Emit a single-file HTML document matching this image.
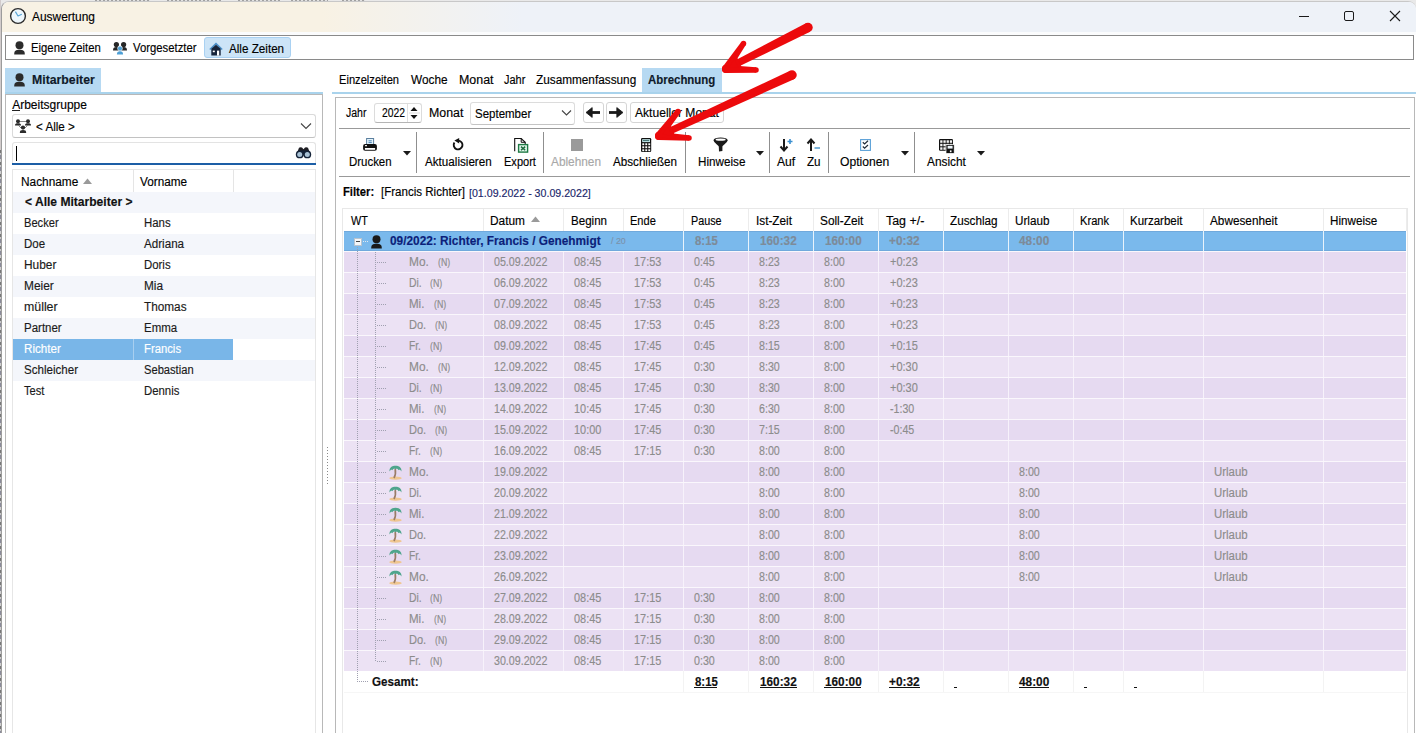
<!DOCTYPE html>
<html><head><meta charset="utf-8"><title>Auswertung</title>
<style>
html,body{margin:0;padding:0;width:1416px;height:733px;overflow:hidden;background:#fff;}
body{position:relative;font-family:"Liberation Sans",sans-serif;}
body>div,body>span,body>svg{position:absolute;}
.t{white-space:nowrap;transform-origin:0 0;}
</style></head><body>
<div style="left:0px;top:0px;width:1416px;height:733px;background:#e9e9e9"></div>
<div style="left:0px;top:0px;width:1px;height:733px;background:#d2cccc"></div>
<div style="left:0px;top:150px;width:1px;height:583px;background:repeating-linear-gradient(180deg,#777 0px,#777 3px,#c8c8c8 3px,#c8c8c8 5px,#8a8a9a 5px,#8a8a9a 9px,#d0d0d0 9px,#d0d0d0 12px)"></div>
<div style="left:95px;top:0px;width:55px;height:1px;background:repeating-linear-gradient(90deg,#a0a0a0 0px,#a0a0a0 2px,#e2e2e2 2px,#e2e2e2 4px)"></div>
<div style="left:167px;top:0px;width:54px;height:1px;background:repeating-linear-gradient(90deg,#a0a0a0 0px,#a0a0a0 2px,#e2e2e2 2px,#e2e2e2 4px)"></div>
<div style="left:238px;top:0px;width:42px;height:1px;background:repeating-linear-gradient(90deg,#a0a0a0 0px,#a0a0a0 2px,#e2e2e2 2px,#e2e2e2 4px)"></div>
<div style="left:291px;top:0px;width:37px;height:1px;background:repeating-linear-gradient(90deg,#a0a0a0 0px,#a0a0a0 2px,#e2e2e2 2px,#e2e2e2 4px)"></div>
<div style="left:342px;top:0px;width:23px;height:1px;background:repeating-linear-gradient(90deg,#a0a0a0 0px,#a0a0a0 2px,#e2e2e2 2px,#e2e2e2 4px)"></div>
<div style="left:1px;top:1px;width:1415px;height:732px;background:#fff;border-top:1px solid #c8c8c8;border-left:1px solid #9c9c9c;border-top-left-radius:8px;border-top-right-radius:8px;box-sizing:border-box"></div>
<div style="left:2px;top:2px;width:1414px;height:30px;background:linear-gradient(90deg,#f8f2e4 0px,#f8f2e4 320px,#eef2f8 520px,#eef2f8 100%);border-top-left-radius:7px;border-top-right-radius:7px"></div>
<div style="left:3px;top:32px;width:1413px;height:3px;background:#fbfcfd"></div>
<svg style="left:9px;top:7px;" width="18" height="18" viewBox="0 0 18 18"><circle cx="9" cy="9" r="7.4" fill="#eef7fc" stroke="#2b2b2b" stroke-width="1.4"/><path d="M6.4 4.6 L9 9 L12.8 7.2" stroke="#5aa6d6" stroke-width="1.2" fill="none" stroke-linejoin="round"/></svg>
<span class="t" style="left:32.00px;top:11px;font-size:12px;line-height:12px;font-weight:400;color:#000;transform:scaleX(0.9941);-webkit-text-stroke:0.15px currentColor;">Auswertung</span>
<div style="left:1299px;top:16px;width:10px;height:1px;background:#1a1a1a"></div>
<div style="left:1344px;top:11px;width:10px;height:10px;border:1px solid #1a1a1a;border-radius:2px;box-sizing:border-box"></div>
<svg style="left:1389px;top:10px;" width="12" height="12" viewBox="0 0 12 12"><path d="M1 1 L11 11 M11 1 L1 11" stroke="#1a1a1a" stroke-width="1.1"/></svg>
<div style="left:5px;top:35px;width:1409px;height:25px;border:1px solid #8a8a8a;box-sizing:border-box;background:#fff"></div>
<svg style="left:14px;top:41px;" width="11" height="14" viewBox="0 0 11 14"><circle cx="5.5" cy="4.2" r="4" fill="#2b2b2b"/><path d="M0.2 13.6 C0.2 9.6 1.8 8.8 5.5 8.8 C9.2 8.8 10.8 9.6 10.8 13.6 Z" fill="#2b2b2b"/></svg>
<span class="t" style="left:30.60px;top:42px;font-size:12px;line-height:12px;font-weight:400;color:#000;transform:scaleX(0.9424);-webkit-text-stroke:0.15px currentColor;">Eigene Zeiten</span>
<svg style="left:113px;top:42px;" width="14" height="13" viewBox="0 0 14 13"><circle cx="3.4" cy="2.6" r="2.6" fill="#262626"/><circle cx="10.6" cy="2.6" r="2.6" fill="#262626"/><path d="M0 8.6 C0 5.6 1.2 5 3.4 5 C5.6 5 6.8 5.6 6.8 8.6 Z" fill="#262626"/><path d="M7.2 8.6 C7.2 5.6 8.4 5 10.6 5 C12.8 5 14 5.6 14 8.6 Z" fill="#262626"/><circle cx="7" cy="6.5" r="2.4" fill="#4c9fd6" stroke="#fff" stroke-width="0.6"/><path d="M3.9 12.6 C3.9 9.9 5 9.2 7 9.2 C9 9.2 10.1 9.9 10.1 12.6 Z" fill="#4c9fd6"/></svg>
<span class="t" style="left:132.50px;top:42px;font-size:12px;line-height:12px;font-weight:400;color:#000;transform:scaleX(0.9425);-webkit-text-stroke:0.15px currentColor;">Vorgesetzter</span>
<div style="left:204px;top:37px;width:87px;height:21px;background:#cce4f7;border:1px solid #a9d1f2;border-radius:3px;box-sizing:border-box"></div>
<svg style="left:209px;top:42px;" width="15" height="14" viewBox="0 0 15 14"><path d="M0.8 7.5 L7 1.6 L13.2 7.5" stroke="#4a8fc8" stroke-width="1.5" fill="none"/><path d="M2.3 6.8 L7 2.8 L11.7 6.8 L11.7 13.6 L2.3 13.6 Z" fill="#16243a"/><rect x="3.8" y="8.6" width="2" height="1.6" fill="#fff"/><rect x="8" y="8.6" width="2.2" height="5" fill="#fff"/></svg>
<span class="t" style="left:228.50px;top:43px;font-size:12px;line-height:12px;font-weight:400;color:#000;transform:scaleX(0.9720);-webkit-text-stroke:0.15px currentColor;">Alle Zeiten</span>
<div style="left:5px;top:68px;width:96px;height:24px;background:#b6d9f2"></div>
<svg style="left:14px;top:73px;" width="11" height="14" viewBox="0 0 11 14"><circle cx="5.5" cy="4.2" r="4" fill="#2b2b2b"/><path d="M0.2 13.6 C0.2 9.6 1.8 8.8 5.5 8.8 C9.2 8.8 10.8 9.6 10.8 13.6 Z" fill="#2b2b2b"/></svg>
<span class="t" style="left:31.90px;top:74px;font-size:12px;line-height:12px;font-weight:700;color:#0f1a2a;transform:scaleX(1.0232);-webkit-text-stroke:0.15px currentColor;">Mitarbeiter</span>
<div style="left:5px;top:92px;width:318px;height:2px;background:#a9d3ec"></div>
<div style="left:5px;top:94px;width:318px;height:650px;border:1px solid #b8b8b8;box-sizing:border-box"></div>
<span class="t" style="left:12.20px;top:99px;font-size:12px;line-height:12px;font-weight:400;color:#000;-webkit-text-stroke:0.15px currentColor;">Arbeitsgruppe</span>
<div style="left:12px;top:110px;width:8px;height:1px;background:#222"></div>
<div style="left:12px;top:114px;width:304px;height:24px;border:1px solid #dadada;border-bottom-color:#c2c2c2;border-radius:3px;box-sizing:border-box;background:#fff"></div>
<svg style="left:15px;top:119px;" width="16" height="14" viewBox="0 0 16 14"><circle cx="3" cy="2.2" r="2" fill="#2b2b2b"/><circle cx="13" cy="2.2" r="2" fill="#2b2b2b"/><path d="M0 6.5 C0 4.5 1 4.2 3 4.2 C5 4.2 6 4.5 6 6.5Z M10 6.5 C10 4.5 11 4.2 13 4.2 C15 4.2 16 4.5 16 6.5Z" fill="#2b2b2b"/><path d="M5 2.5 L11 2.5 M3.5 6.5 L6.5 9.5 M12.5 6.5 L9.5 9.5" stroke="#555" stroke-width="0.7"/><circle cx="8" cy="8.6" r="2.1" fill="#2b2b2b"/><path d="M4.8 14 C4.8 11.6 5.8 11 8 11 C10.2 11 11.2 11.6 11.2 14Z" fill="#2b2b2b"/></svg>
<span class="t" style="left:36.20px;top:121px;font-size:12px;line-height:12px;font-weight:400;color:#000;transform:scaleX(0.9710);-webkit-text-stroke:0.15px currentColor;">&lt; Alle &gt;</span>
<svg style="left:300px;top:122px;" width="12" height="8" viewBox="0 0 12 8"><path d="M1 1.5 L6 6.5 L11 1.5" stroke="#444" stroke-width="1.1" fill="none"/></svg>
<div style="left:12px;top:142px;width:304px;height:23px;border:1px solid #e3e3e3;border-bottom:none;border-radius:3px 3px 0 0;box-sizing:border-box;background:#fff"></div>
<div style="left:12px;top:163px;width:304px;height:2px;background:#1c5ea6"></div>
<div style="left:16px;top:146px;width:1px;height:15px;background:#000"></div>
<svg style="left:295px;top:146px;" width="17" height="13" viewBox="0 0 17 13"><path d="M2.2 6.5 L4 1.8 Q5.5 0.6 7 1.6 L8.5 3.2 L10 1.6 Q11.5 0.6 13 1.8 L14.8 6.5 Z" fill="#1e1e24"/><rect x="6" y="4.5" width="5" height="5" fill="#142238"/><circle cx="4.7" cy="8.4" r="3.9" fill="#142238"/><circle cx="12.3" cy="8.4" r="3.9" fill="#142238"/><circle cx="4.7" cy="8.4" r="2.5" fill="#a9c2d6"/><circle cx="12.3" cy="8.4" r="2.5" fill="#a9c2d6"/></svg>
<div style="left:12px;top:169px;width:304px;height:580px;border:1px solid #e6e6e6;box-sizing:border-box;background:#fff"></div>
<div style="left:133px;top:170px;width:1px;height:22px;background:#e5e5e5"></div>
<div style="left:233px;top:170px;width:1px;height:22px;background:#e5e5e5"></div>
<span class="t" style="left:20.60px;top:176px;font-size:12px;line-height:12px;font-weight:400;color:#000;transform:scaleX(0.9869);-webkit-text-stroke:0.15px currentColor;">Nachname</span>
<svg style="left:83px;top:178px;" width="9" height="6" viewBox="0 0 9 6"><path d="M0 6 L4.5 0.5 L9 6 Z" fill="#9a9a9a"/></svg>
<span class="t" style="left:140.00px;top:176px;font-size:12px;line-height:12px;font-weight:400;color:#000;transform:scaleX(0.9792);-webkit-text-stroke:0.15px currentColor;">Vorname</span>
<div style="left:13px;top:192px;width:302px;height:21px;background:#f4f6fb"></div>
<span class="t" style="left:25.00px;top:196px;font-size:12px;line-height:12px;font-weight:700;color:#111;transform:scaleX(1.0053);-webkit-text-stroke:0.15px currentColor;">&lt; Alle Mitarbeiter &gt;</span>
<span class="t" style="left:24.40px;top:217px;font-size:12px;line-height:12px;font-weight:400;color:#1a1a1a;transform:scaleX(0.9258);-webkit-text-stroke:0.15px currentColor;">Becker</span>
<span class="t" style="left:144.40px;top:217px;font-size:12px;line-height:12px;font-weight:400;color:#1a1a1a;transform:scaleX(0.9500);-webkit-text-stroke:0.15px currentColor;">Hans</span>
<div style="left:13px;top:234px;width:302px;height:21px;background:#f4f6fb"></div>
<span class="t" style="left:24.40px;top:238px;font-size:12px;line-height:12px;font-weight:400;color:#1a1a1a;transform:scaleX(0.9591);-webkit-text-stroke:0.15px currentColor;">Doe</span>
<span class="t" style="left:144.40px;top:238px;font-size:12px;line-height:12px;font-weight:400;color:#1a1a1a;transform:scaleX(0.9692);-webkit-text-stroke:0.15px currentColor;">Adriana</span>
<span class="t" style="left:24.40px;top:259px;font-size:12px;line-height:12px;font-weight:400;color:#1a1a1a;transform:scaleX(0.9912);-webkit-text-stroke:0.15px currentColor;">Huber</span>
<span class="t" style="left:144.40px;top:259px;font-size:12px;line-height:12px;font-weight:400;color:#1a1a1a;transform:scaleX(0.9500);-webkit-text-stroke:0.15px currentColor;">Doris</span>
<div style="left:13px;top:276px;width:302px;height:21px;background:#f4f6fb"></div>
<span class="t" style="left:24.40px;top:280px;font-size:12px;line-height:12px;font-weight:400;color:#1a1a1a;transform:scaleX(0.9933);-webkit-text-stroke:0.15px currentColor;">Meier</span>
<span class="t" style="left:144.40px;top:280px;font-size:12px;line-height:12px;font-weight:400;color:#1a1a1a;transform:scaleX(0.9858);-webkit-text-stroke:0.15px currentColor;">Mia</span>
<span class="t" style="left:24.40px;top:301px;font-size:12px;line-height:12px;font-weight:400;color:#1a1a1a;transform:scaleX(1.0279);-webkit-text-stroke:0.15px currentColor;">müller</span>
<span class="t" style="left:144.40px;top:301px;font-size:12px;line-height:12px;font-weight:400;color:#1a1a1a;transform:scaleX(0.9821);-webkit-text-stroke:0.15px currentColor;">Thomas</span>
<div style="left:13px;top:318px;width:302px;height:21px;background:#f4f6fb"></div>
<span class="t" style="left:24.40px;top:322px;font-size:12px;line-height:12px;font-weight:400;color:#1a1a1a;transform:scaleX(0.9575);-webkit-text-stroke:0.15px currentColor;">Partner</span>
<span class="t" style="left:144.40px;top:322px;font-size:12px;line-height:12px;font-weight:400;color:#1a1a1a;transform:scaleX(0.9571);-webkit-text-stroke:0.15px currentColor;">Emma</span>
<div style="left:13px;top:339px;width:220px;height:21px;background:#79b6e8"></div>
<div style="left:133px;top:339px;width:1px;height:21px;background:#a8cff0"></div>
<span class="t" style="left:24.40px;top:343px;font-size:12px;line-height:12px;font-weight:400;color:#fff;transform:scaleX(0.9684);-webkit-text-stroke:0.15px currentColor;">Richter</span>
<span class="t" style="left:144.40px;top:343px;font-size:12px;line-height:12px;font-weight:400;color:#fff;transform:scaleX(0.9412);-webkit-text-stroke:0.15px currentColor;">Francis</span>
<div style="left:13px;top:360px;width:302px;height:21px;background:#f4f6fb"></div>
<span class="t" style="left:24.40px;top:364px;font-size:12px;line-height:12px;font-weight:400;color:#1a1a1a;transform:scaleX(0.9643);-webkit-text-stroke:0.15px currentColor;">Schleicher</span>
<span class="t" style="left:144.40px;top:364px;font-size:12px;line-height:12px;font-weight:400;color:#1a1a1a;transform:scaleX(0.9293);-webkit-text-stroke:0.15px currentColor;">Sebastian</span>
<span class="t" style="left:24.40px;top:385px;font-size:12px;line-height:12px;font-weight:400;color:#1a1a1a;transform:scaleX(0.9273);-webkit-text-stroke:0.15px currentColor;">Test</span>
<span class="t" style="left:144.40px;top:385px;font-size:12px;line-height:12px;font-weight:400;color:#1a1a1a;transform:scaleX(0.9472);-webkit-text-stroke:0.15px currentColor;">Dennis</span>
<div style="left:327px;top:447px;width:1px;height:38px;background:repeating-linear-gradient(180deg,#8a8a8a 0px,#8a8a8a 1px,transparent 1px,transparent 3px)"></div>
<span class="t" style="left:338.50px;top:74px;font-size:12px;line-height:12px;font-weight:400;color:#000;transform:scaleX(0.9275);-webkit-text-stroke:0.15px currentColor;">Einzelzeiten</span>
<span class="t" style="left:410.50px;top:74px;font-size:12px;line-height:12px;font-weight:400;color:#000;transform:scaleX(0.9832);-webkit-text-stroke:0.15px currentColor;">Woche</span>
<span class="t" style="left:458.50px;top:74px;font-size:12px;line-height:12px;font-weight:400;color:#000;transform:scaleX(1.0337);-webkit-text-stroke:0.15px currentColor;">Monat</span>
<span class="t" style="left:503.70px;top:74px;font-size:12px;line-height:12px;font-weight:400;color:#000;transform:scaleX(0.9112);-webkit-text-stroke:0.15px currentColor;">Jahr</span>
<span class="t" style="left:536.30px;top:74px;font-size:12px;line-height:12px;font-weight:400;color:#000;transform:scaleX(0.9818);-webkit-text-stroke:0.15px currentColor;">Zusammenfassung</span>
<div style="left:642px;top:68px;width:80px;height:24px;background:#b6d9f2"></div>
<span class="t" style="left:648.40px;top:74px;font-size:12px;line-height:12px;font-weight:700;color:#0f1a2a;transform:scaleX(0.9521);-webkit-text-stroke:0.15px currentColor;">Abrechnung</span>
<div style="left:332px;top:92px;width:1084px;height:2px;background:#a9d3ec"></div>
<div style="left:335px;top:97px;width:1080px;height:650px;border:1px solid #b8b8b8;box-sizing:border-box"></div>
<span class="t" style="left:346.30px;top:107px;font-size:12px;line-height:12px;font-weight:400;color:#000;transform:scaleX(0.8770);-webkit-text-stroke:0.15px currentColor;">Jahr</span>
<div style="left:374px;top:103px;width:48px;height:20px;border:1px solid #dcdcdc;border-bottom-color:#b5b5b5;border-radius:3px;box-sizing:border-box"></div>
<span class="t" style="left:382.30px;top:107px;font-size:12px;line-height:12px;font-weight:400;color:#000;transform:scaleX(0.8618);-webkit-text-stroke:0.15px currentColor;">2022</span>
<div style="left:407px;top:104px;width:13px;height:18px;border-left:1px solid #e0e0e0"></div>
<svg style="left:408px;top:105px;" width="12" height="16" viewBox="0 0 12 16"><path d="M2.5 6 L6 2 L9.5 6Z M2.5 10 L6 14 L9.5 10Z" fill="#111"/><path d="M1 8 L12 8" stroke="#ddd" stroke-width="1"/></svg>
<span class="t" style="left:429.40px;top:107px;font-size:12px;line-height:12px;font-weight:400;color:#000;transform:scaleX(1.0307);-webkit-text-stroke:0.15px currentColor;">Monat</span>
<div style="left:470px;top:102px;width:105px;height:23px;border:1px solid #dcdcdc;border-bottom-color:#c4c4c4;border-radius:3px;box-sizing:border-box"></div>
<span class="t" style="left:474.50px;top:108px;font-size:12px;line-height:12px;font-weight:400;color:#000;transform:scaleX(0.9576);-webkit-text-stroke:0.15px currentColor;">September</span>
<svg style="left:561px;top:109px;" width="11" height="8" viewBox="0 0 11 8"><path d="M1 1.5 L5.5 6 L10 1.5" stroke="#444" stroke-width="1.1" fill="none"/></svg>
<div style="left:583px;top:102px;width:21px;height:21px;border:1px solid #d5d5d5;border-radius:3px;box-sizing:border-box"></div>
<svg style="left:585px;top:106px;" width="16" height="12" viewBox="0 0 16 12"><path d="M1 6.5 L7.2 1.6 L7.2 11.4 Z" fill="#1a1a1a" stroke="#1a1a1a" stroke-width="0.8" stroke-linejoin="round"/><rect x="6" y="5.1" width="9" height="2.8" fill="#1a1a1a"/></svg>
<div style="left:606px;top:102px;width:21px;height:21px;border:1px solid #d5d5d5;border-radius:3px;box-sizing:border-box"></div>
<svg style="left:608px;top:106px;" width="16" height="12" viewBox="0 0 16 12"><path d="M15 6.5 L8.8 1.6 L8.8 11.4 Z" fill="#1a1a1a" stroke="#1a1a1a" stroke-width="0.8" stroke-linejoin="round"/><rect x="1" y="5.1" width="9" height="2.8" fill="#1a1a1a"/></svg>
<div style="left:630px;top:102px;width:94px;height:21px;border:1px solid #d5d5d5;border-radius:3px;box-sizing:border-box"></div>
<span class="t" style="left:635.40px;top:107px;font-size:12px;line-height:12px;font-weight:400;color:#000;transform:scaleX(1.0063);-webkit-text-stroke:0.15px currentColor;">Aktueller Monat</span>
<div style="left:339px;top:128px;width:1071px;height:1px;background:#999"></div>
<div style="left:416px;top:132px;width:1px;height:41px;background:#8f8f8f"></div>
<div style="left:543px;top:132px;width:1px;height:41px;background:#8f8f8f"></div>
<div style="left:685px;top:132px;width:1px;height:41px;background:#8f8f8f"></div>
<div style="left:769px;top:132px;width:1px;height:41px;background:#8f8f8f"></div>
<div style="left:828px;top:132px;width:1px;height:41px;background:#8f8f8f"></div>
<div style="left:914px;top:132px;width:1px;height:41px;background:#8f8f8f"></div>
<div style="left:339px;top:176px;width:1071px;height:1px;background:#999"></div>
<svg style="left:362px;top:137px;" width="16" height="15" viewBox="0 0 16 15"><rect x="4.6" y="1.5" width="7" height="6" fill="#e3f3fb" stroke="#5b7f9e" stroke-width="1"/><path d="M6.5 3.8 H9.8 M6.5 5.6 H9.8" stroke="#3b78ae" stroke-width="0.9"/><rect x="1.1" y="7" width="13.8" height="6.8" rx="2" fill="#111"/><rect x="2.9" y="11" width="10.2" height="1.8" fill="#fff"/><rect x="3" y="8.1" width="2" height="1.1" fill="#fff"/></svg>
<span class="t" style="left:348.60px;top:156px;font-size:12px;line-height:12px;font-weight:400;color:#000;transform:scaleX(0.9533);-webkit-text-stroke:0.15px currentColor;">Drucken</span>
<svg style="left:403px;top:151px;" width="8" height="5" viewBox="0 0 8 5"><path d="M0 0 L8 0 L4 4.5Z" fill="#1a1a1a"/></svg>
<svg style="left:451px;top:137px;" width="14" height="14" viewBox="0 0 14 14"><path d="M7.5 3.6 A4.4 4.4 0 1 1 3.4 5.6" stroke="#111" stroke-width="1.9" fill="none"/><path d="M3.4 3.6 L8.2 0.9 L8.2 6.4 Z" fill="#111"/></svg>
<span class="t" style="left:424.70px;top:156px;font-size:12px;line-height:12px;font-weight:400;color:#000;transform:scaleX(0.9711);-webkit-text-stroke:0.15px currentColor;">Aktualisieren</span>
<svg style="left:513px;top:137px;" width="16" height="16" viewBox="0 0 16 16"><path d="M1.7 14.2 V1.5 H8.2 L12.2 5.3 V8" stroke="#111" stroke-width="1.1" fill="#fff"/><path d="M8.2 1.5 V5.3 H12.2" stroke="#111" stroke-width="1" fill="none"/><rect x="5.6" y="7.6" width="9" height="7.5" fill="#e6fbf0" stroke="#1e7a45" stroke-width="1.4"/><path d="M8 9.6 L12.2 13.2 M12.2 9.6 L8 13.2" stroke="#1e6b3e" stroke-width="1.5"/></svg>
<span class="t" style="left:503.60px;top:156px;font-size:12px;line-height:12px;font-weight:400;color:#000;transform:scaleX(0.9196);-webkit-text-stroke:0.15px currentColor;">Export</span>
<div style="left:571px;top:139px;width:12px;height:12px;background:#9a9a9a"></div>
<span class="t" style="left:551.00px;top:156px;font-size:12px;line-height:12px;font-weight:400;color:#a8a8a8;transform:scaleX(0.9864);-webkit-text-stroke:0.15px currentColor;">Ablehnen</span>
<svg style="left:640px;top:137px;" width="12" height="16" viewBox="0 0 12 16"><rect x="1" y="1" width="10.2" height="14" rx="1.2" fill="#111"/><rect x="2.2" y="2.2" width="7.8" height="2.9" fill="#c6ecee"/><path d="M3 3.6 H9.2" stroke="#2a5a5a" stroke-width="0.9"/><rect x="2.3" y="6.3" width="1.9" height="1.9" fill="#fff"/><rect x="2.3" y="9.3" width="1.9" height="1.9" fill="#fff"/><rect x="2.3" y="12.3" width="1.9" height="1.9" fill="#fff"/><rect x="5.3" y="6.3" width="1.9" height="1.9" fill="#fff"/><rect x="5.3" y="9.3" width="1.9" height="1.9" fill="#fff"/><rect x="5.3" y="12.3" width="1.9" height="1.9" fill="#fff"/><rect x="8.3" y="6.3" width="1.9" height="1.9" fill="#fff"/><rect x="8.3" y="9.3" width="1.9" height="1.9" fill="#fff"/><rect x="8.3" y="12.3" width="1.9" height="1.9" fill="#fff"/></svg>
<span class="t" style="left:613.20px;top:156px;font-size:12px;line-height:12px;font-weight:400;color:#000;transform:scaleX(0.9703);-webkit-text-stroke:0.15px currentColor;">Abschließen</span>
<svg style="left:713px;top:137px;" width="16" height="16" viewBox="0 0 16 16"><path d="M0.6 3 C1 6.2 5.6 8 5.8 9.8 L6 14.6 L9.4 13.9 L9.4 9.8 C9.6 8 14.2 6.2 14.6 3 Z" fill="#1a1a1a"/><ellipse cx="7.6" cy="3" rx="7" ry="2.5" fill="#1a1a1a"/><ellipse cx="7.6" cy="2.7" rx="5" ry="1.1" fill="#fff"/></svg>
<span class="t" style="left:697.60px;top:156px;font-size:12px;line-height:12px;font-weight:400;color:#000;transform:scaleX(0.9736);-webkit-text-stroke:0.15px currentColor;">Hinweise</span>
<svg style="left:756px;top:151px;" width="8" height="5" viewBox="0 0 8 5"><path d="M0 0 L8 0 L4 4.5Z" fill="#1a1a1a"/></svg>
<svg style="left:779px;top:138px;" width="15" height="14" viewBox="0 0 15 14"><path d="M5 1 L5 12 M1.5 8.5 L5 12.5 L8.5 8.5" stroke="#1a1a1a" stroke-width="2" fill="none"/><path d="M11 1 L11 6 M8.5 3.5 L13.5 3.5" stroke="#3a8fd0" stroke-width="1.6"/></svg>
<span class="t" style="left:777.20px;top:156px;font-size:12px;line-height:12px;font-weight:400;color:#000;transform:scaleX(1.0131);-webkit-text-stroke:0.15px currentColor;">Auf</span>
<svg style="left:806px;top:138px;" width="15" height="14" viewBox="0 0 15 14"><path d="M5 13 L5 2 M1.5 5.5 L5 1.5 L8.5 5.5" stroke="#1a1a1a" stroke-width="2" fill="none"/><path d="M8.5 10 L14 10" stroke="#5aa0d0" stroke-width="1.6"/></svg>
<span class="t" style="left:807.00px;top:156px;font-size:12px;line-height:12px;font-weight:400;color:#000;transform:scaleX(0.9714);-webkit-text-stroke:0.15px currentColor;">Zu</span>
<svg style="left:860px;top:139px;" width="11" height="12" viewBox="0 0 11 12"><rect x="0.6" y="0.6" width="9.8" height="10.8" fill="#fff" stroke="#5aa0d8" stroke-width="1.1"/><path d="M2.8 3.3 L4.6 5 L8 1.8 M2.8 7.5 L4.6 9.2 L8 6" stroke="#1e2a38" stroke-width="1.2" fill="none"/></svg>
<span class="t" style="left:840.40px;top:156px;font-size:12px;line-height:12px;font-weight:400;color:#000;transform:scaleX(1.0105);-webkit-text-stroke:0.15px currentColor;">Optionen</span>
<svg style="left:901px;top:151px;" width="8" height="5" viewBox="0 0 8 5"><path d="M0 0 L8 0 L4 4.5Z" fill="#1a1a1a"/></svg>
<svg style="left:938px;top:138px;" width="17" height="16" viewBox="0 0 17 16"><rect x="1" y="1" width="14" height="11.8" rx="1.2" fill="#111"/><rect x="2.2" y="2.3" width="2.3" height="2.5" fill="#f4f4f4"/><rect x="2.2" y="5.8" width="2.3" height="2.5" fill="#f4f4f4"/><rect x="2.2" y="9.3" width="2.3" height="2.5" fill="#f4f4f4"/><rect x="5.4" y="2.3" width="2.3" height="2.5" fill="#f4f4f4"/><rect x="5.4" y="5.8" width="2.3" height="2.5" fill="#f4f4f4"/><rect x="5.4" y="9.3" width="2.3" height="2.5" fill="#f4f4f4"/><rect x="8.6" y="2.3" width="2.3" height="2.5" fill="#f4f4f4"/><rect x="8.6" y="5.8" width="2.3" height="2.5" fill="#f4f4f4"/><rect x="8.6" y="9.3" width="2.3" height="2.5" fill="#f4f4f4"/><rect x="11.8" y="2.3" width="2.3" height="2.5" fill="#f4f4f4"/><rect x="11.8" y="5.8" width="2.3" height="2.5" fill="#f4f4f4"/><rect x="11.8" y="9.3" width="2.3" height="2.5" fill="#f4f4f4"/><rect x="8" y="6.6" width="8.2" height="8.8" fill="#111" stroke="#fff" stroke-width="0.7"/><rect x="9.6" y="7.8" width="5" height="2.8" fill="#eef6fb"/><rect x="11.9" y="12.4" width="1.6" height="1.8" fill="#fff"/></svg>
<span class="t" style="left:926.90px;top:156px;font-size:12px;line-height:12px;font-weight:400;color:#000;transform:scaleX(0.9879);-webkit-text-stroke:0.15px currentColor;">Ansicht</span>
<svg style="left:977px;top:151px;" width="8" height="5" viewBox="0 0 8 5"><path d="M0 0 L8 0 L4 4.5Z" fill="#1a1a1a"/></svg>
<span class="t" style="left:342.60px;top:186px;font-size:12px;line-height:12px;font-weight:700;color:#000;transform:scaleX(0.9366);-webkit-text-stroke:0.15px currentColor;">Filter:</span>
<span class="t" style="left:380.60px;top:186px;font-size:12px;line-height:12px;font-weight:400;color:#000;transform:scaleX(0.9625);-webkit-text-stroke:0.15px currentColor;">[Francis Richter]</span>
<span class="t" style="left:468.70px;top:188px;font-size:11px;line-height:11px;font-weight:400;color:#20266a;transform:scaleX(0.9667);-webkit-text-stroke:0.15px currentColor;">[01.09.2022 - 30.09.2022]</span>
<div style="left:342px;top:208px;width:1066px;height:540px;border:1px solid #e8e8e8;box-sizing:border-box;background:#fff"></div>
<span class="t" style="left:350.60px;top:215px;font-size:12px;line-height:12px;font-weight:400;color:#000;transform:scaleX(0.9043);-webkit-text-stroke:0.15px currentColor;">WT</span>
<div style="left:483px;top:209px;width:1px;height:22px;background:#ececec"></div>
<span class="t" style="left:490.40px;top:215px;font-size:12px;line-height:12px;font-weight:400;color:#000;transform:scaleX(0.9894);-webkit-text-stroke:0.15px currentColor;">Datum</span>
<div style="left:563px;top:209px;width:1px;height:22px;background:#ececec"></div>
<span class="t" style="left:570.50px;top:215px;font-size:12px;line-height:12px;font-weight:400;color:#000;transform:scaleX(0.9632);-webkit-text-stroke:0.15px currentColor;">Beginn</span>
<div style="left:623px;top:209px;width:1px;height:22px;background:#ececec"></div>
<span class="t" style="left:630.20px;top:215px;font-size:12px;line-height:12px;font-weight:400;color:#000;transform:scaleX(0.9214);-webkit-text-stroke:0.15px currentColor;">Ende</span>
<div style="left:683px;top:209px;width:1px;height:22px;background:#ececec"></div>
<span class="t" style="left:690.50px;top:215px;font-size:12px;line-height:12px;font-weight:400;color:#000;transform:scaleX(0.8971);-webkit-text-stroke:0.15px currentColor;">Pause</span>
<div style="left:748px;top:209px;width:1px;height:22px;background:#ececec"></div>
<span class="t" style="left:755.60px;top:215px;font-size:12px;line-height:12px;font-weight:400;color:#000;transform:scaleX(0.9813);-webkit-text-stroke:0.15px currentColor;">Ist-Zeit</span>
<div style="left:813px;top:209px;width:1px;height:22px;background:#ececec"></div>
<span class="t" style="left:820.20px;top:215px;font-size:12px;line-height:12px;font-weight:400;color:#000;transform:scaleX(0.9864);-webkit-text-stroke:0.15px currentColor;">Soll-Zeit</span>
<div style="left:878px;top:209px;width:1px;height:22px;background:#ececec"></div>
<span class="t" style="left:885.90px;top:215px;font-size:12px;line-height:12px;font-weight:400;color:#000;transform:scaleX(1.0351);-webkit-text-stroke:0.15px currentColor;">Tag +/-</span>
<div style="left:943px;top:209px;width:1px;height:22px;background:#ececec"></div>
<span class="t" style="left:949.70px;top:215px;font-size:12px;line-height:12px;font-weight:400;color:#000;transform:scaleX(0.9777);-webkit-text-stroke:0.15px currentColor;">Zuschlag</span>
<div style="left:1008px;top:209px;width:1px;height:22px;background:#ececec"></div>
<span class="t" style="left:1015.30px;top:215px;font-size:12px;line-height:12px;font-weight:400;color:#000;transform:scaleX(0.9724);-webkit-text-stroke:0.15px currentColor;">Urlaub</span>
<div style="left:1073px;top:209px;width:1px;height:22px;background:#ececec"></div>
<span class="t" style="left:1080.40px;top:215px;font-size:12px;line-height:12px;font-weight:400;color:#000;transform:scaleX(0.9288);-webkit-text-stroke:0.15px currentColor;">Krank</span>
<div style="left:1123px;top:209px;width:1px;height:22px;background:#ececec"></div>
<span class="t" style="left:1130.20px;top:215px;font-size:12px;line-height:12px;font-weight:400;color:#000;transform:scaleX(0.9600);-webkit-text-stroke:0.15px currentColor;">Kurzarbeit</span>
<div style="left:1203px;top:209px;width:1px;height:22px;background:#ececec"></div>
<span class="t" style="left:1210.40px;top:215px;font-size:12px;line-height:12px;font-weight:400;color:#000;transform:scaleX(0.9813);-webkit-text-stroke:0.15px currentColor;">Abwesenheit</span>
<div style="left:1323px;top:209px;width:1px;height:22px;background:#ececec"></div>
<span class="t" style="left:1330.40px;top:215px;font-size:12px;line-height:12px;font-weight:400;color:#000;transform:scaleX(0.9715);-webkit-text-stroke:0.15px currentColor;">Hinweise</span>
<div style="left:1406px;top:209px;width:1px;height:22px;background:#ececec"></div>
<svg style="left:531px;top:216px;" width="9" height="6" viewBox="0 0 9 6"><path d="M0 6 L4.5 0.5 L9 6 Z" fill="#9a9a9a"/></svg>
<div style="left:344px;top:231px;width:1062px;height:20px;background:#7ab9ec"></div>
<div style="left:344px;top:231px;width:1062px;height:1px;background:#70a9dc"></div>
<div style="left:344px;top:250px;width:1062px;height:1px;background:#70a9dc"></div>
<div style="left:683px;top:231px;width:1px;height:20px;background:#e8f3fc"></div>
<div style="left:748px;top:231px;width:1px;height:20px;background:#e8f3fc"></div>
<div style="left:813px;top:231px;width:1px;height:20px;background:#e8f3fc"></div>
<div style="left:878px;top:231px;width:1px;height:20px;background:#e8f3fc"></div>
<div style="left:943px;top:231px;width:1px;height:20px;background:#e8f3fc"></div>
<div style="left:1008px;top:231px;width:1px;height:20px;background:#e8f3fc"></div>
<div style="left:1073px;top:231px;width:1px;height:20px;background:#e8f3fc"></div>
<div style="left:1123px;top:231px;width:1px;height:20px;background:#e8f3fc"></div>
<div style="left:1203px;top:231px;width:1px;height:20px;background:#e8f3fc"></div>
<div style="left:1323px;top:231px;width:1px;height:20px;background:#e8f3fc"></div>
<div style="left:344px;top:251px;width:1062px;height:1px;background:#e6f5fc"></div>
<div style="left:354px;top:238px;width:8px;height:8px;border:1px solid #b8c4d0;background:#f4f6f8;box-sizing:border-box"></div>
<div style="left:356px;top:241px;width:4px;height:1px;background:#444"></div>
<div style="left:363px;top:241px;width:6px;height:1px;background:repeating-linear-gradient(90deg,#dfe9f3 0px,#dfe9f3 1px,transparent 1px,transparent 2px)"></div>
<svg style="left:371px;top:235px;" width="11" height="14" viewBox="0 0 11 14"><circle cx="5.5" cy="4.2" r="4" fill="#1a1a1a"/><path d="M0.2 13.6 C0.2 9.6 1.8 8.8 5.5 8.8 C9.2 8.8 10.8 9.6 10.8 13.6 Z" fill="#1a1a1a"/></svg>
<span class="t" style="left:390.00px;top:235px;font-size:12px;line-height:12px;font-weight:700;color:#0c1f7a;transform:scaleX(0.9867);-webkit-text-stroke:0.15px currentColor;">09/2022: Richter, Francis / Genehmigt</span>
<span class="t" style="left:610.50px;top:237px;font-size:9px;line-height:9px;font-weight:400;color:#7a93ad;transform:scaleX(0.9867);-webkit-text-stroke:0.15px currentColor;">/ 20</span>
<span class="t" style="left:694.50px;top:235px;font-size:12px;line-height:12px;font-weight:700;color:#7d8b99;transform:scaleX(0.9500);-webkit-text-stroke:0.15px currentColor;">8:15</span>
<span class="t" style="left:759.70px;top:235px;font-size:12px;line-height:12px;font-weight:700;color:#7d8b99;transform:scaleX(0.9819);-webkit-text-stroke:0.15px currentColor;">160:32</span>
<span class="t" style="left:824.50px;top:235px;font-size:12px;line-height:12px;font-weight:700;color:#7d8b99;transform:scaleX(0.9819);-webkit-text-stroke:0.15px currentColor;">160:00</span>
<span class="t" style="left:889.30px;top:235px;font-size:12px;line-height:12px;font-weight:700;color:#7d8b99;transform:scaleX(0.9903);-webkit-text-stroke:0.15px currentColor;">+0:32</span>
<span class="t" style="left:1019.00px;top:235px;font-size:12px;line-height:12px;font-weight:700;color:#7d8b99;transform:scaleX(0.9841);-webkit-text-stroke:0.15px currentColor;">48:00</span>
<div style="left:344px;top:251px;width:1062px;height:1px;background:#faf7fc"></div>
<div style="left:344px;top:252px;width:1062px;height:20px;background:#e6daf1"></div>
<div style="left:483px;top:252px;width:1px;height:20px;background:#f7f2fb"></div>
<div style="left:563px;top:252px;width:1px;height:20px;background:#f7f2fb"></div>
<div style="left:623px;top:252px;width:1px;height:20px;background:#f7f2fb"></div>
<div style="left:683px;top:252px;width:1px;height:20px;background:#f7f2fb"></div>
<div style="left:748px;top:252px;width:1px;height:20px;background:#f7f2fb"></div>
<div style="left:813px;top:252px;width:1px;height:20px;background:#f7f2fb"></div>
<div style="left:878px;top:252px;width:1px;height:20px;background:#f7f2fb"></div>
<div style="left:943px;top:252px;width:1px;height:20px;background:#f7f2fb"></div>
<div style="left:1008px;top:252px;width:1px;height:20px;background:#f7f2fb"></div>
<div style="left:1073px;top:252px;width:1px;height:20px;background:#f7f2fb"></div>
<div style="left:1123px;top:252px;width:1px;height:20px;background:#f7f2fb"></div>
<div style="left:1203px;top:252px;width:1px;height:20px;background:#f7f2fb"></div>
<div style="left:1323px;top:252px;width:1px;height:20px;background:#f7f2fb"></div>
<div style="left:377px;top:262px;width:10px;height:1px;background:repeating-linear-gradient(90deg,#a0a0b0 0px,#a0a0b0 1px,transparent 1px,transparent 2px)"></div>
<span class="t" style="left:408.60px;top:256px;font-size:12px;line-height:12px;font-weight:400;color:#8c8c8c;transform:scaleX(0.9900);-webkit-text-stroke:0.15px currentColor;">Mo.</span>
<span class="t" style="left:437.50px;top:258px;font-size:10px;line-height:10px;font-weight:400;color:#8c8c8c;transform:scaleX(0.8793);-webkit-text-stroke:0.15px currentColor;">(N)</span>
<span class="t" style="left:494.30px;top:256px;font-size:12px;line-height:12px;font-weight:400;color:#8c8c8c;transform:scaleX(0.8891);-webkit-text-stroke:0.15px currentColor;">05.09.2022</span>
<span class="t" style="left:573.80px;top:256px;font-size:12px;line-height:12px;font-weight:400;color:#8c8c8c;transform:scaleX(0.9100);-webkit-text-stroke:0.15px currentColor;">08:45</span>
<span class="t" style="left:634.00px;top:256px;font-size:12px;line-height:12px;font-weight:400;color:#8c8c8c;transform:scaleX(0.9100);-webkit-text-stroke:0.15px currentColor;">17:53</span>
<span class="t" style="left:694.00px;top:256px;font-size:12px;line-height:12px;font-weight:400;color:#8c8c8c;transform:scaleX(0.8898);-webkit-text-stroke:0.15px currentColor;">0:45</span>
<span class="t" style="left:759.10px;top:256px;font-size:12px;line-height:12px;font-weight:400;color:#8c8c8c;transform:scaleX(0.8898);-webkit-text-stroke:0.15px currentColor;">8:23</span>
<span class="t" style="left:824.20px;top:256px;font-size:12px;line-height:12px;font-weight:400;color:#8c8c8c;transform:scaleX(0.8898);-webkit-text-stroke:0.15px currentColor;">8:00</span>
<span class="t" style="left:889.60px;top:256px;font-size:12px;line-height:12px;font-weight:400;color:#8c8c8c;transform:scaleX(0.9152);-webkit-text-stroke:0.15px currentColor;">+0:23</span>
<div style="left:344px;top:272px;width:1062px;height:1px;background:#faf7fc"></div>
<div style="left:344px;top:273px;width:1062px;height:20px;background:#ece2f4"></div>
<div style="left:483px;top:273px;width:1px;height:20px;background:#f7f2fb"></div>
<div style="left:563px;top:273px;width:1px;height:20px;background:#f7f2fb"></div>
<div style="left:623px;top:273px;width:1px;height:20px;background:#f7f2fb"></div>
<div style="left:683px;top:273px;width:1px;height:20px;background:#f7f2fb"></div>
<div style="left:748px;top:273px;width:1px;height:20px;background:#f7f2fb"></div>
<div style="left:813px;top:273px;width:1px;height:20px;background:#f7f2fb"></div>
<div style="left:878px;top:273px;width:1px;height:20px;background:#f7f2fb"></div>
<div style="left:943px;top:273px;width:1px;height:20px;background:#f7f2fb"></div>
<div style="left:1008px;top:273px;width:1px;height:20px;background:#f7f2fb"></div>
<div style="left:1073px;top:273px;width:1px;height:20px;background:#f7f2fb"></div>
<div style="left:1123px;top:273px;width:1px;height:20px;background:#f7f2fb"></div>
<div style="left:1203px;top:273px;width:1px;height:20px;background:#f7f2fb"></div>
<div style="left:1323px;top:273px;width:1px;height:20px;background:#f7f2fb"></div>
<div style="left:377px;top:283px;width:10px;height:1px;background:repeating-linear-gradient(90deg,#a0a0b0 0px,#a0a0b0 1px,transparent 1px,transparent 2px)"></div>
<span class="t" style="left:408.60px;top:277px;font-size:12px;line-height:12px;font-weight:400;color:#8c8c8c;transform:scaleX(0.8647);-webkit-text-stroke:0.15px currentColor;">Di.</span>
<span class="t" style="left:430.30px;top:279px;font-size:10px;line-height:10px;font-weight:400;color:#8c8c8c;transform:scaleX(0.8793);-webkit-text-stroke:0.15px currentColor;">(N)</span>
<span class="t" style="left:494.30px;top:277px;font-size:12px;line-height:12px;font-weight:400;color:#8c8c8c;transform:scaleX(0.8891);-webkit-text-stroke:0.15px currentColor;">06.09.2022</span>
<span class="t" style="left:573.80px;top:277px;font-size:12px;line-height:12px;font-weight:400;color:#8c8c8c;transform:scaleX(0.9100);-webkit-text-stroke:0.15px currentColor;">08:45</span>
<span class="t" style="left:634.00px;top:277px;font-size:12px;line-height:12px;font-weight:400;color:#8c8c8c;transform:scaleX(0.9100);-webkit-text-stroke:0.15px currentColor;">17:53</span>
<span class="t" style="left:694.00px;top:277px;font-size:12px;line-height:12px;font-weight:400;color:#8c8c8c;transform:scaleX(0.8898);-webkit-text-stroke:0.15px currentColor;">0:45</span>
<span class="t" style="left:759.10px;top:277px;font-size:12px;line-height:12px;font-weight:400;color:#8c8c8c;transform:scaleX(0.8898);-webkit-text-stroke:0.15px currentColor;">8:23</span>
<span class="t" style="left:824.20px;top:277px;font-size:12px;line-height:12px;font-weight:400;color:#8c8c8c;transform:scaleX(0.8898);-webkit-text-stroke:0.15px currentColor;">8:00</span>
<span class="t" style="left:889.60px;top:277px;font-size:12px;line-height:12px;font-weight:400;color:#8c8c8c;transform:scaleX(0.9152);-webkit-text-stroke:0.15px currentColor;">+0:23</span>
<div style="left:344px;top:293px;width:1062px;height:1px;background:#faf7fc"></div>
<div style="left:344px;top:294px;width:1062px;height:20px;background:#e6daf1"></div>
<div style="left:483px;top:294px;width:1px;height:20px;background:#f7f2fb"></div>
<div style="left:563px;top:294px;width:1px;height:20px;background:#f7f2fb"></div>
<div style="left:623px;top:294px;width:1px;height:20px;background:#f7f2fb"></div>
<div style="left:683px;top:294px;width:1px;height:20px;background:#f7f2fb"></div>
<div style="left:748px;top:294px;width:1px;height:20px;background:#f7f2fb"></div>
<div style="left:813px;top:294px;width:1px;height:20px;background:#f7f2fb"></div>
<div style="left:878px;top:294px;width:1px;height:20px;background:#f7f2fb"></div>
<div style="left:943px;top:294px;width:1px;height:20px;background:#f7f2fb"></div>
<div style="left:1008px;top:294px;width:1px;height:20px;background:#f7f2fb"></div>
<div style="left:1073px;top:294px;width:1px;height:20px;background:#f7f2fb"></div>
<div style="left:1123px;top:294px;width:1px;height:20px;background:#f7f2fb"></div>
<div style="left:1203px;top:294px;width:1px;height:20px;background:#f7f2fb"></div>
<div style="left:1323px;top:294px;width:1px;height:20px;background:#f7f2fb"></div>
<div style="left:377px;top:304px;width:10px;height:1px;background:repeating-linear-gradient(90deg,#a0a0b0 0px,#a0a0b0 1px,transparent 1px,transparent 2px)"></div>
<span class="t" style="left:408.60px;top:298px;font-size:12px;line-height:12px;font-weight:400;color:#8c8c8c;transform:scaleX(0.9625);-webkit-text-stroke:0.15px currentColor;">Mi.</span>
<span class="t" style="left:433.60px;top:300px;font-size:10px;line-height:10px;font-weight:400;color:#8c8c8c;transform:scaleX(0.8793);-webkit-text-stroke:0.15px currentColor;">(N)</span>
<span class="t" style="left:494.30px;top:298px;font-size:12px;line-height:12px;font-weight:400;color:#8c8c8c;transform:scaleX(0.8891);-webkit-text-stroke:0.15px currentColor;">07.09.2022</span>
<span class="t" style="left:573.80px;top:298px;font-size:12px;line-height:12px;font-weight:400;color:#8c8c8c;transform:scaleX(0.9100);-webkit-text-stroke:0.15px currentColor;">08:45</span>
<span class="t" style="left:634.00px;top:298px;font-size:12px;line-height:12px;font-weight:400;color:#8c8c8c;transform:scaleX(0.9100);-webkit-text-stroke:0.15px currentColor;">17:53</span>
<span class="t" style="left:694.00px;top:298px;font-size:12px;line-height:12px;font-weight:400;color:#8c8c8c;transform:scaleX(0.8898);-webkit-text-stroke:0.15px currentColor;">0:45</span>
<span class="t" style="left:759.10px;top:298px;font-size:12px;line-height:12px;font-weight:400;color:#8c8c8c;transform:scaleX(0.8898);-webkit-text-stroke:0.15px currentColor;">8:23</span>
<span class="t" style="left:824.20px;top:298px;font-size:12px;line-height:12px;font-weight:400;color:#8c8c8c;transform:scaleX(0.8898);-webkit-text-stroke:0.15px currentColor;">8:00</span>
<span class="t" style="left:889.60px;top:298px;font-size:12px;line-height:12px;font-weight:400;color:#8c8c8c;transform:scaleX(0.9152);-webkit-text-stroke:0.15px currentColor;">+0:23</span>
<div style="left:344px;top:314px;width:1062px;height:1px;background:#faf7fc"></div>
<div style="left:344px;top:315px;width:1062px;height:20px;background:#ece2f4"></div>
<div style="left:483px;top:315px;width:1px;height:20px;background:#f7f2fb"></div>
<div style="left:563px;top:315px;width:1px;height:20px;background:#f7f2fb"></div>
<div style="left:623px;top:315px;width:1px;height:20px;background:#f7f2fb"></div>
<div style="left:683px;top:315px;width:1px;height:20px;background:#f7f2fb"></div>
<div style="left:748px;top:315px;width:1px;height:20px;background:#f7f2fb"></div>
<div style="left:813px;top:315px;width:1px;height:20px;background:#f7f2fb"></div>
<div style="left:878px;top:315px;width:1px;height:20px;background:#f7f2fb"></div>
<div style="left:943px;top:315px;width:1px;height:20px;background:#f7f2fb"></div>
<div style="left:1008px;top:315px;width:1px;height:20px;background:#f7f2fb"></div>
<div style="left:1073px;top:315px;width:1px;height:20px;background:#f7f2fb"></div>
<div style="left:1123px;top:315px;width:1px;height:20px;background:#f7f2fb"></div>
<div style="left:1203px;top:315px;width:1px;height:20px;background:#f7f2fb"></div>
<div style="left:1323px;top:315px;width:1px;height:20px;background:#f7f2fb"></div>
<div style="left:377px;top:325px;width:10px;height:1px;background:repeating-linear-gradient(90deg,#a0a0b0 0px,#a0a0b0 1px,transparent 1px,transparent 2px)"></div>
<span class="t" style="left:408.60px;top:319px;font-size:12px;line-height:12px;font-weight:400;color:#8c8c8c;transform:scaleX(0.9204);-webkit-text-stroke:0.15px currentColor;">Do.</span>
<span class="t" style="left:434.90px;top:321px;font-size:10px;line-height:10px;font-weight:400;color:#8c8c8c;transform:scaleX(0.8793);-webkit-text-stroke:0.15px currentColor;">(N)</span>
<span class="t" style="left:494.30px;top:319px;font-size:12px;line-height:12px;font-weight:400;color:#8c8c8c;transform:scaleX(0.8891);-webkit-text-stroke:0.15px currentColor;">08.09.2022</span>
<span class="t" style="left:573.80px;top:319px;font-size:12px;line-height:12px;font-weight:400;color:#8c8c8c;transform:scaleX(0.9100);-webkit-text-stroke:0.15px currentColor;">08:45</span>
<span class="t" style="left:634.00px;top:319px;font-size:12px;line-height:12px;font-weight:400;color:#8c8c8c;transform:scaleX(0.9100);-webkit-text-stroke:0.15px currentColor;">17:53</span>
<span class="t" style="left:694.00px;top:319px;font-size:12px;line-height:12px;font-weight:400;color:#8c8c8c;transform:scaleX(0.8898);-webkit-text-stroke:0.15px currentColor;">0:45</span>
<span class="t" style="left:759.10px;top:319px;font-size:12px;line-height:12px;font-weight:400;color:#8c8c8c;transform:scaleX(0.8898);-webkit-text-stroke:0.15px currentColor;">8:23</span>
<span class="t" style="left:824.20px;top:319px;font-size:12px;line-height:12px;font-weight:400;color:#8c8c8c;transform:scaleX(0.8898);-webkit-text-stroke:0.15px currentColor;">8:00</span>
<span class="t" style="left:889.60px;top:319px;font-size:12px;line-height:12px;font-weight:400;color:#8c8c8c;transform:scaleX(0.9152);-webkit-text-stroke:0.15px currentColor;">+0:23</span>
<div style="left:344px;top:335px;width:1062px;height:1px;background:#faf7fc"></div>
<div style="left:344px;top:336px;width:1062px;height:20px;background:#e6daf1"></div>
<div style="left:483px;top:336px;width:1px;height:20px;background:#f7f2fb"></div>
<div style="left:563px;top:336px;width:1px;height:20px;background:#f7f2fb"></div>
<div style="left:623px;top:336px;width:1px;height:20px;background:#f7f2fb"></div>
<div style="left:683px;top:336px;width:1px;height:20px;background:#f7f2fb"></div>
<div style="left:748px;top:336px;width:1px;height:20px;background:#f7f2fb"></div>
<div style="left:813px;top:336px;width:1px;height:20px;background:#f7f2fb"></div>
<div style="left:878px;top:336px;width:1px;height:20px;background:#f7f2fb"></div>
<div style="left:943px;top:336px;width:1px;height:20px;background:#f7f2fb"></div>
<div style="left:1008px;top:336px;width:1px;height:20px;background:#f7f2fb"></div>
<div style="left:1073px;top:336px;width:1px;height:20px;background:#f7f2fb"></div>
<div style="left:1123px;top:336px;width:1px;height:20px;background:#f7f2fb"></div>
<div style="left:1203px;top:336px;width:1px;height:20px;background:#f7f2fb"></div>
<div style="left:1323px;top:336px;width:1px;height:20px;background:#f7f2fb"></div>
<div style="left:377px;top:346px;width:10px;height:1px;background:repeating-linear-gradient(90deg,#a0a0b0 0px,#a0a0b0 1px,transparent 1px,transparent 2px)"></div>
<span class="t" style="left:408.60px;top:340px;font-size:12px;line-height:12px;font-weight:400;color:#8c8c8c;transform:scaleX(0.8500);-webkit-text-stroke:0.15px currentColor;">Fr.</span>
<span class="t" style="left:429.70px;top:342px;font-size:10px;line-height:10px;font-weight:400;color:#8c8c8c;transform:scaleX(0.8793);-webkit-text-stroke:0.15px currentColor;">(N)</span>
<span class="t" style="left:494.30px;top:340px;font-size:12px;line-height:12px;font-weight:400;color:#8c8c8c;transform:scaleX(0.8891);-webkit-text-stroke:0.15px currentColor;">09.09.2022</span>
<span class="t" style="left:573.80px;top:340px;font-size:12px;line-height:12px;font-weight:400;color:#8c8c8c;transform:scaleX(0.9100);-webkit-text-stroke:0.15px currentColor;">08:45</span>
<span class="t" style="left:634.00px;top:340px;font-size:12px;line-height:12px;font-weight:400;color:#8c8c8c;transform:scaleX(0.9100);-webkit-text-stroke:0.15px currentColor;">17:45</span>
<span class="t" style="left:694.00px;top:340px;font-size:12px;line-height:12px;font-weight:400;color:#8c8c8c;transform:scaleX(0.8898);-webkit-text-stroke:0.15px currentColor;">0:45</span>
<span class="t" style="left:759.10px;top:340px;font-size:12px;line-height:12px;font-weight:400;color:#8c8c8c;transform:scaleX(0.8898);-webkit-text-stroke:0.15px currentColor;">8:15</span>
<span class="t" style="left:824.20px;top:340px;font-size:12px;line-height:12px;font-weight:400;color:#8c8c8c;transform:scaleX(0.8898);-webkit-text-stroke:0.15px currentColor;">8:00</span>
<span class="t" style="left:889.60px;top:340px;font-size:12px;line-height:12px;font-weight:400;color:#8c8c8c;transform:scaleX(0.9152);-webkit-text-stroke:0.15px currentColor;">+0:15</span>
<div style="left:344px;top:356px;width:1062px;height:1px;background:#faf7fc"></div>
<div style="left:344px;top:357px;width:1062px;height:20px;background:#ece2f4"></div>
<div style="left:483px;top:357px;width:1px;height:20px;background:#f7f2fb"></div>
<div style="left:563px;top:357px;width:1px;height:20px;background:#f7f2fb"></div>
<div style="left:623px;top:357px;width:1px;height:20px;background:#f7f2fb"></div>
<div style="left:683px;top:357px;width:1px;height:20px;background:#f7f2fb"></div>
<div style="left:748px;top:357px;width:1px;height:20px;background:#f7f2fb"></div>
<div style="left:813px;top:357px;width:1px;height:20px;background:#f7f2fb"></div>
<div style="left:878px;top:357px;width:1px;height:20px;background:#f7f2fb"></div>
<div style="left:943px;top:357px;width:1px;height:20px;background:#f7f2fb"></div>
<div style="left:1008px;top:357px;width:1px;height:20px;background:#f7f2fb"></div>
<div style="left:1073px;top:357px;width:1px;height:20px;background:#f7f2fb"></div>
<div style="left:1123px;top:357px;width:1px;height:20px;background:#f7f2fb"></div>
<div style="left:1203px;top:357px;width:1px;height:20px;background:#f7f2fb"></div>
<div style="left:1323px;top:357px;width:1px;height:20px;background:#f7f2fb"></div>
<div style="left:377px;top:367px;width:10px;height:1px;background:repeating-linear-gradient(90deg,#a0a0b0 0px,#a0a0b0 1px,transparent 1px,transparent 2px)"></div>
<span class="t" style="left:408.60px;top:361px;font-size:12px;line-height:12px;font-weight:400;color:#8c8c8c;transform:scaleX(0.9900);-webkit-text-stroke:0.15px currentColor;">Mo.</span>
<span class="t" style="left:437.50px;top:363px;font-size:10px;line-height:10px;font-weight:400;color:#8c8c8c;transform:scaleX(0.8793);-webkit-text-stroke:0.15px currentColor;">(N)</span>
<span class="t" style="left:494.30px;top:361px;font-size:12px;line-height:12px;font-weight:400;color:#8c8c8c;transform:scaleX(0.8891);-webkit-text-stroke:0.15px currentColor;">12.09.2022</span>
<span class="t" style="left:573.80px;top:361px;font-size:12px;line-height:12px;font-weight:400;color:#8c8c8c;transform:scaleX(0.9100);-webkit-text-stroke:0.15px currentColor;">08:45</span>
<span class="t" style="left:634.00px;top:361px;font-size:12px;line-height:12px;font-weight:400;color:#8c8c8c;transform:scaleX(0.9100);-webkit-text-stroke:0.15px currentColor;">17:45</span>
<span class="t" style="left:694.00px;top:361px;font-size:12px;line-height:12px;font-weight:400;color:#8c8c8c;transform:scaleX(0.8898);-webkit-text-stroke:0.15px currentColor;">0:30</span>
<span class="t" style="left:759.10px;top:361px;font-size:12px;line-height:12px;font-weight:400;color:#8c8c8c;transform:scaleX(0.8898);-webkit-text-stroke:0.15px currentColor;">8:30</span>
<span class="t" style="left:824.20px;top:361px;font-size:12px;line-height:12px;font-weight:400;color:#8c8c8c;transform:scaleX(0.8898);-webkit-text-stroke:0.15px currentColor;">8:00</span>
<span class="t" style="left:889.60px;top:361px;font-size:12px;line-height:12px;font-weight:400;color:#8c8c8c;transform:scaleX(0.9152);-webkit-text-stroke:0.15px currentColor;">+0:30</span>
<div style="left:344px;top:377px;width:1062px;height:1px;background:#faf7fc"></div>
<div style="left:344px;top:378px;width:1062px;height:20px;background:#e6daf1"></div>
<div style="left:483px;top:378px;width:1px;height:20px;background:#f7f2fb"></div>
<div style="left:563px;top:378px;width:1px;height:20px;background:#f7f2fb"></div>
<div style="left:623px;top:378px;width:1px;height:20px;background:#f7f2fb"></div>
<div style="left:683px;top:378px;width:1px;height:20px;background:#f7f2fb"></div>
<div style="left:748px;top:378px;width:1px;height:20px;background:#f7f2fb"></div>
<div style="left:813px;top:378px;width:1px;height:20px;background:#f7f2fb"></div>
<div style="left:878px;top:378px;width:1px;height:20px;background:#f7f2fb"></div>
<div style="left:943px;top:378px;width:1px;height:20px;background:#f7f2fb"></div>
<div style="left:1008px;top:378px;width:1px;height:20px;background:#f7f2fb"></div>
<div style="left:1073px;top:378px;width:1px;height:20px;background:#f7f2fb"></div>
<div style="left:1123px;top:378px;width:1px;height:20px;background:#f7f2fb"></div>
<div style="left:1203px;top:378px;width:1px;height:20px;background:#f7f2fb"></div>
<div style="left:1323px;top:378px;width:1px;height:20px;background:#f7f2fb"></div>
<div style="left:377px;top:388px;width:10px;height:1px;background:repeating-linear-gradient(90deg,#a0a0b0 0px,#a0a0b0 1px,transparent 1px,transparent 2px)"></div>
<span class="t" style="left:408.60px;top:382px;font-size:12px;line-height:12px;font-weight:400;color:#8c8c8c;transform:scaleX(0.8647);-webkit-text-stroke:0.15px currentColor;">Di.</span>
<span class="t" style="left:430.30px;top:384px;font-size:10px;line-height:10px;font-weight:400;color:#8c8c8c;transform:scaleX(0.8793);-webkit-text-stroke:0.15px currentColor;">(N)</span>
<span class="t" style="left:494.30px;top:382px;font-size:12px;line-height:12px;font-weight:400;color:#8c8c8c;transform:scaleX(0.8891);-webkit-text-stroke:0.15px currentColor;">13.09.2022</span>
<span class="t" style="left:573.80px;top:382px;font-size:12px;line-height:12px;font-weight:400;color:#8c8c8c;transform:scaleX(0.9100);-webkit-text-stroke:0.15px currentColor;">08:45</span>
<span class="t" style="left:634.00px;top:382px;font-size:12px;line-height:12px;font-weight:400;color:#8c8c8c;transform:scaleX(0.9100);-webkit-text-stroke:0.15px currentColor;">17:45</span>
<span class="t" style="left:694.00px;top:382px;font-size:12px;line-height:12px;font-weight:400;color:#8c8c8c;transform:scaleX(0.8898);-webkit-text-stroke:0.15px currentColor;">0:30</span>
<span class="t" style="left:759.10px;top:382px;font-size:12px;line-height:12px;font-weight:400;color:#8c8c8c;transform:scaleX(0.8898);-webkit-text-stroke:0.15px currentColor;">8:30</span>
<span class="t" style="left:824.20px;top:382px;font-size:12px;line-height:12px;font-weight:400;color:#8c8c8c;transform:scaleX(0.8898);-webkit-text-stroke:0.15px currentColor;">8:00</span>
<span class="t" style="left:889.60px;top:382px;font-size:12px;line-height:12px;font-weight:400;color:#8c8c8c;transform:scaleX(0.9152);-webkit-text-stroke:0.15px currentColor;">+0:30</span>
<div style="left:344px;top:398px;width:1062px;height:1px;background:#faf7fc"></div>
<div style="left:344px;top:399px;width:1062px;height:20px;background:#ece2f4"></div>
<div style="left:483px;top:399px;width:1px;height:20px;background:#f7f2fb"></div>
<div style="left:563px;top:399px;width:1px;height:20px;background:#f7f2fb"></div>
<div style="left:623px;top:399px;width:1px;height:20px;background:#f7f2fb"></div>
<div style="left:683px;top:399px;width:1px;height:20px;background:#f7f2fb"></div>
<div style="left:748px;top:399px;width:1px;height:20px;background:#f7f2fb"></div>
<div style="left:813px;top:399px;width:1px;height:20px;background:#f7f2fb"></div>
<div style="left:878px;top:399px;width:1px;height:20px;background:#f7f2fb"></div>
<div style="left:943px;top:399px;width:1px;height:20px;background:#f7f2fb"></div>
<div style="left:1008px;top:399px;width:1px;height:20px;background:#f7f2fb"></div>
<div style="left:1073px;top:399px;width:1px;height:20px;background:#f7f2fb"></div>
<div style="left:1123px;top:399px;width:1px;height:20px;background:#f7f2fb"></div>
<div style="left:1203px;top:399px;width:1px;height:20px;background:#f7f2fb"></div>
<div style="left:1323px;top:399px;width:1px;height:20px;background:#f7f2fb"></div>
<div style="left:377px;top:409px;width:10px;height:1px;background:repeating-linear-gradient(90deg,#a0a0b0 0px,#a0a0b0 1px,transparent 1px,transparent 2px)"></div>
<span class="t" style="left:408.60px;top:403px;font-size:12px;line-height:12px;font-weight:400;color:#8c8c8c;transform:scaleX(0.9625);-webkit-text-stroke:0.15px currentColor;">Mi.</span>
<span class="t" style="left:433.60px;top:405px;font-size:10px;line-height:10px;font-weight:400;color:#8c8c8c;transform:scaleX(0.8793);-webkit-text-stroke:0.15px currentColor;">(N)</span>
<span class="t" style="left:494.30px;top:403px;font-size:12px;line-height:12px;font-weight:400;color:#8c8c8c;transform:scaleX(0.8891);-webkit-text-stroke:0.15px currentColor;">14.09.2022</span>
<span class="t" style="left:573.80px;top:403px;font-size:12px;line-height:12px;font-weight:400;color:#8c8c8c;transform:scaleX(0.9100);-webkit-text-stroke:0.15px currentColor;">10:45</span>
<span class="t" style="left:634.00px;top:403px;font-size:12px;line-height:12px;font-weight:400;color:#8c8c8c;transform:scaleX(0.9100);-webkit-text-stroke:0.15px currentColor;">17:45</span>
<span class="t" style="left:694.00px;top:403px;font-size:12px;line-height:12px;font-weight:400;color:#8c8c8c;transform:scaleX(0.8898);-webkit-text-stroke:0.15px currentColor;">0:30</span>
<span class="t" style="left:759.10px;top:403px;font-size:12px;line-height:12px;font-weight:400;color:#8c8c8c;transform:scaleX(0.8898);-webkit-text-stroke:0.15px currentColor;">6:30</span>
<span class="t" style="left:824.20px;top:403px;font-size:12px;line-height:12px;font-weight:400;color:#8c8c8c;transform:scaleX(0.8898);-webkit-text-stroke:0.15px currentColor;">8:00</span>
<span class="t" style="left:889.60px;top:403px;font-size:12px;line-height:12px;font-weight:400;color:#8c8c8c;transform:scaleX(0.8877);-webkit-text-stroke:0.15px currentColor;">-1:30</span>
<div style="left:344px;top:419px;width:1062px;height:1px;background:#faf7fc"></div>
<div style="left:344px;top:420px;width:1062px;height:20px;background:#e6daf1"></div>
<div style="left:483px;top:420px;width:1px;height:20px;background:#f7f2fb"></div>
<div style="left:563px;top:420px;width:1px;height:20px;background:#f7f2fb"></div>
<div style="left:623px;top:420px;width:1px;height:20px;background:#f7f2fb"></div>
<div style="left:683px;top:420px;width:1px;height:20px;background:#f7f2fb"></div>
<div style="left:748px;top:420px;width:1px;height:20px;background:#f7f2fb"></div>
<div style="left:813px;top:420px;width:1px;height:20px;background:#f7f2fb"></div>
<div style="left:878px;top:420px;width:1px;height:20px;background:#f7f2fb"></div>
<div style="left:943px;top:420px;width:1px;height:20px;background:#f7f2fb"></div>
<div style="left:1008px;top:420px;width:1px;height:20px;background:#f7f2fb"></div>
<div style="left:1073px;top:420px;width:1px;height:20px;background:#f7f2fb"></div>
<div style="left:1123px;top:420px;width:1px;height:20px;background:#f7f2fb"></div>
<div style="left:1203px;top:420px;width:1px;height:20px;background:#f7f2fb"></div>
<div style="left:1323px;top:420px;width:1px;height:20px;background:#f7f2fb"></div>
<div style="left:377px;top:430px;width:10px;height:1px;background:repeating-linear-gradient(90deg,#a0a0b0 0px,#a0a0b0 1px,transparent 1px,transparent 2px)"></div>
<span class="t" style="left:408.60px;top:424px;font-size:12px;line-height:12px;font-weight:400;color:#8c8c8c;transform:scaleX(0.9204);-webkit-text-stroke:0.15px currentColor;">Do.</span>
<span class="t" style="left:434.90px;top:426px;font-size:10px;line-height:10px;font-weight:400;color:#8c8c8c;transform:scaleX(0.8793);-webkit-text-stroke:0.15px currentColor;">(N)</span>
<span class="t" style="left:494.30px;top:424px;font-size:12px;line-height:12px;font-weight:400;color:#8c8c8c;transform:scaleX(0.8891);-webkit-text-stroke:0.15px currentColor;">15.09.2022</span>
<span class="t" style="left:573.80px;top:424px;font-size:12px;line-height:12px;font-weight:400;color:#8c8c8c;transform:scaleX(0.9100);-webkit-text-stroke:0.15px currentColor;">10:00</span>
<span class="t" style="left:634.00px;top:424px;font-size:12px;line-height:12px;font-weight:400;color:#8c8c8c;transform:scaleX(0.9100);-webkit-text-stroke:0.15px currentColor;">17:45</span>
<span class="t" style="left:694.00px;top:424px;font-size:12px;line-height:12px;font-weight:400;color:#8c8c8c;transform:scaleX(0.8898);-webkit-text-stroke:0.15px currentColor;">0:30</span>
<span class="t" style="left:759.10px;top:424px;font-size:12px;line-height:12px;font-weight:400;color:#8c8c8c;transform:scaleX(0.8898);-webkit-text-stroke:0.15px currentColor;">7:15</span>
<span class="t" style="left:824.20px;top:424px;font-size:12px;line-height:12px;font-weight:400;color:#8c8c8c;transform:scaleX(0.8898);-webkit-text-stroke:0.15px currentColor;">8:00</span>
<span class="t" style="left:889.60px;top:424px;font-size:12px;line-height:12px;font-weight:400;color:#8c8c8c;transform:scaleX(0.8877);-webkit-text-stroke:0.15px currentColor;">-0:45</span>
<div style="left:344px;top:440px;width:1062px;height:1px;background:#faf7fc"></div>
<div style="left:344px;top:441px;width:1062px;height:20px;background:#ece2f4"></div>
<div style="left:483px;top:441px;width:1px;height:20px;background:#f7f2fb"></div>
<div style="left:563px;top:441px;width:1px;height:20px;background:#f7f2fb"></div>
<div style="left:623px;top:441px;width:1px;height:20px;background:#f7f2fb"></div>
<div style="left:683px;top:441px;width:1px;height:20px;background:#f7f2fb"></div>
<div style="left:748px;top:441px;width:1px;height:20px;background:#f7f2fb"></div>
<div style="left:813px;top:441px;width:1px;height:20px;background:#f7f2fb"></div>
<div style="left:878px;top:441px;width:1px;height:20px;background:#f7f2fb"></div>
<div style="left:943px;top:441px;width:1px;height:20px;background:#f7f2fb"></div>
<div style="left:1008px;top:441px;width:1px;height:20px;background:#f7f2fb"></div>
<div style="left:1073px;top:441px;width:1px;height:20px;background:#f7f2fb"></div>
<div style="left:1123px;top:441px;width:1px;height:20px;background:#f7f2fb"></div>
<div style="left:1203px;top:441px;width:1px;height:20px;background:#f7f2fb"></div>
<div style="left:1323px;top:441px;width:1px;height:20px;background:#f7f2fb"></div>
<div style="left:377px;top:451px;width:10px;height:1px;background:repeating-linear-gradient(90deg,#a0a0b0 0px,#a0a0b0 1px,transparent 1px,transparent 2px)"></div>
<span class="t" style="left:408.60px;top:445px;font-size:12px;line-height:12px;font-weight:400;color:#8c8c8c;transform:scaleX(0.8500);-webkit-text-stroke:0.15px currentColor;">Fr.</span>
<span class="t" style="left:429.70px;top:447px;font-size:10px;line-height:10px;font-weight:400;color:#8c8c8c;transform:scaleX(0.8793);-webkit-text-stroke:0.15px currentColor;">(N)</span>
<span class="t" style="left:494.30px;top:445px;font-size:12px;line-height:12px;font-weight:400;color:#8c8c8c;transform:scaleX(0.8891);-webkit-text-stroke:0.15px currentColor;">16.09.2022</span>
<span class="t" style="left:573.80px;top:445px;font-size:12px;line-height:12px;font-weight:400;color:#8c8c8c;transform:scaleX(0.9100);-webkit-text-stroke:0.15px currentColor;">08:45</span>
<span class="t" style="left:634.00px;top:445px;font-size:12px;line-height:12px;font-weight:400;color:#8c8c8c;transform:scaleX(0.9100);-webkit-text-stroke:0.15px currentColor;">17:15</span>
<span class="t" style="left:694.00px;top:445px;font-size:12px;line-height:12px;font-weight:400;color:#8c8c8c;transform:scaleX(0.8898);-webkit-text-stroke:0.15px currentColor;">0:30</span>
<span class="t" style="left:759.10px;top:445px;font-size:12px;line-height:12px;font-weight:400;color:#8c8c8c;transform:scaleX(0.8898);-webkit-text-stroke:0.15px currentColor;">8:00</span>
<span class="t" style="left:824.20px;top:445px;font-size:12px;line-height:12px;font-weight:400;color:#8c8c8c;transform:scaleX(0.8898);-webkit-text-stroke:0.15px currentColor;">8:00</span>
<div style="left:344px;top:461px;width:1062px;height:1px;background:#faf7fc"></div>
<div style="left:344px;top:462px;width:1062px;height:20px;background:#e6daf1"></div>
<div style="left:483px;top:462px;width:1px;height:20px;background:#f7f2fb"></div>
<div style="left:563px;top:462px;width:1px;height:20px;background:#f7f2fb"></div>
<div style="left:623px;top:462px;width:1px;height:20px;background:#f7f2fb"></div>
<div style="left:683px;top:462px;width:1px;height:20px;background:#f7f2fb"></div>
<div style="left:748px;top:462px;width:1px;height:20px;background:#f7f2fb"></div>
<div style="left:813px;top:462px;width:1px;height:20px;background:#f7f2fb"></div>
<div style="left:878px;top:462px;width:1px;height:20px;background:#f7f2fb"></div>
<div style="left:943px;top:462px;width:1px;height:20px;background:#f7f2fb"></div>
<div style="left:1008px;top:462px;width:1px;height:20px;background:#f7f2fb"></div>
<div style="left:1073px;top:462px;width:1px;height:20px;background:#f7f2fb"></div>
<div style="left:1123px;top:462px;width:1px;height:20px;background:#f7f2fb"></div>
<div style="left:1203px;top:462px;width:1px;height:20px;background:#f7f2fb"></div>
<div style="left:1323px;top:462px;width:1px;height:20px;background:#f7f2fb"></div>
<div style="left:377px;top:472px;width:10px;height:1px;background:repeating-linear-gradient(90deg,#a0a0b0 0px,#a0a0b0 1px,transparent 1px,transparent 2px)"></div>
<svg style="left:387.5px;top:464px;" width="16" height="16" viewBox="0 0 16 16"><ellipse cx="7.5" cy="14.2" rx="6.2" ry="1.6" fill="#efc690"/><path d="M7.2 5 C7.8 8 7.6 11 6 14" stroke="#9a7c66" stroke-width="1.7" fill="none"/><path d="M1.5 7.5 C1.2 3.5 4 1.8 7.5 1.8 C11 1.8 13.8 3.5 13.5 7.5 C12.5 5.8 11.5 5.2 10.5 6.2 C9.8 4.8 8.5 4.4 7.5 5.2 C6.5 4.4 5.2 4.8 4.5 6.2 C3.5 5.2 2.5 5.8 1.5 7.5 Z" fill="#4ea58c"/></svg>
<span class="t" style="left:408.60px;top:466px;font-size:12px;line-height:12px;font-weight:400;color:#8c8c8c;transform:scaleX(0.9900);-webkit-text-stroke:0.15px currentColor;">Mo.</span>
<span class="t" style="left:494.30px;top:466px;font-size:12px;line-height:12px;font-weight:400;color:#8c8c8c;transform:scaleX(0.8891);-webkit-text-stroke:0.15px currentColor;">19.09.2022</span>
<span class="t" style="left:759.10px;top:466px;font-size:12px;line-height:12px;font-weight:400;color:#8c8c8c;transform:scaleX(0.8898);-webkit-text-stroke:0.15px currentColor;">8:00</span>
<span class="t" style="left:824.20px;top:466px;font-size:12px;line-height:12px;font-weight:400;color:#8c8c8c;transform:scaleX(0.8898);-webkit-text-stroke:0.15px currentColor;">8:00</span>
<span class="t" style="left:1019.00px;top:466px;font-size:12px;line-height:12px;font-weight:400;color:#8c8c8c;transform:scaleX(0.8898);-webkit-text-stroke:0.15px currentColor;">8:00</span>
<span class="t" style="left:1214.00px;top:466px;font-size:12px;line-height:12px;font-weight:400;color:#8c8c8c;transform:scaleX(0.9500);-webkit-text-stroke:0.15px currentColor;">Urlaub</span>
<div style="left:344px;top:482px;width:1062px;height:1px;background:#faf7fc"></div>
<div style="left:344px;top:483px;width:1062px;height:20px;background:#ece2f4"></div>
<div style="left:483px;top:483px;width:1px;height:20px;background:#f7f2fb"></div>
<div style="left:563px;top:483px;width:1px;height:20px;background:#f7f2fb"></div>
<div style="left:623px;top:483px;width:1px;height:20px;background:#f7f2fb"></div>
<div style="left:683px;top:483px;width:1px;height:20px;background:#f7f2fb"></div>
<div style="left:748px;top:483px;width:1px;height:20px;background:#f7f2fb"></div>
<div style="left:813px;top:483px;width:1px;height:20px;background:#f7f2fb"></div>
<div style="left:878px;top:483px;width:1px;height:20px;background:#f7f2fb"></div>
<div style="left:943px;top:483px;width:1px;height:20px;background:#f7f2fb"></div>
<div style="left:1008px;top:483px;width:1px;height:20px;background:#f7f2fb"></div>
<div style="left:1073px;top:483px;width:1px;height:20px;background:#f7f2fb"></div>
<div style="left:1123px;top:483px;width:1px;height:20px;background:#f7f2fb"></div>
<div style="left:1203px;top:483px;width:1px;height:20px;background:#f7f2fb"></div>
<div style="left:1323px;top:483px;width:1px;height:20px;background:#f7f2fb"></div>
<div style="left:377px;top:493px;width:10px;height:1px;background:repeating-linear-gradient(90deg,#a0a0b0 0px,#a0a0b0 1px,transparent 1px,transparent 2px)"></div>
<svg style="left:387.5px;top:485px;" width="16" height="16" viewBox="0 0 16 16"><ellipse cx="7.5" cy="14.2" rx="6.2" ry="1.6" fill="#efc690"/><path d="M7.2 5 C7.8 8 7.6 11 6 14" stroke="#9a7c66" stroke-width="1.7" fill="none"/><path d="M1.5 7.5 C1.2 3.5 4 1.8 7.5 1.8 C11 1.8 13.8 3.5 13.5 7.5 C12.5 5.8 11.5 5.2 10.5 6.2 C9.8 4.8 8.5 4.4 7.5 5.2 C6.5 4.4 5.2 4.8 4.5 6.2 C3.5 5.2 2.5 5.8 1.5 7.5 Z" fill="#4ea58c"/></svg>
<span class="t" style="left:408.60px;top:487px;font-size:12px;line-height:12px;font-weight:400;color:#8c8c8c;transform:scaleX(0.8647);-webkit-text-stroke:0.15px currentColor;">Di.</span>
<span class="t" style="left:494.30px;top:487px;font-size:12px;line-height:12px;font-weight:400;color:#8c8c8c;transform:scaleX(0.8891);-webkit-text-stroke:0.15px currentColor;">20.09.2022</span>
<span class="t" style="left:759.10px;top:487px;font-size:12px;line-height:12px;font-weight:400;color:#8c8c8c;transform:scaleX(0.8898);-webkit-text-stroke:0.15px currentColor;">8:00</span>
<span class="t" style="left:824.20px;top:487px;font-size:12px;line-height:12px;font-weight:400;color:#8c8c8c;transform:scaleX(0.8898);-webkit-text-stroke:0.15px currentColor;">8:00</span>
<span class="t" style="left:1019.00px;top:487px;font-size:12px;line-height:12px;font-weight:400;color:#8c8c8c;transform:scaleX(0.8898);-webkit-text-stroke:0.15px currentColor;">8:00</span>
<span class="t" style="left:1214.00px;top:487px;font-size:12px;line-height:12px;font-weight:400;color:#8c8c8c;transform:scaleX(0.9500);-webkit-text-stroke:0.15px currentColor;">Urlaub</span>
<div style="left:344px;top:503px;width:1062px;height:1px;background:#faf7fc"></div>
<div style="left:344px;top:504px;width:1062px;height:20px;background:#e6daf1"></div>
<div style="left:483px;top:504px;width:1px;height:20px;background:#f7f2fb"></div>
<div style="left:563px;top:504px;width:1px;height:20px;background:#f7f2fb"></div>
<div style="left:623px;top:504px;width:1px;height:20px;background:#f7f2fb"></div>
<div style="left:683px;top:504px;width:1px;height:20px;background:#f7f2fb"></div>
<div style="left:748px;top:504px;width:1px;height:20px;background:#f7f2fb"></div>
<div style="left:813px;top:504px;width:1px;height:20px;background:#f7f2fb"></div>
<div style="left:878px;top:504px;width:1px;height:20px;background:#f7f2fb"></div>
<div style="left:943px;top:504px;width:1px;height:20px;background:#f7f2fb"></div>
<div style="left:1008px;top:504px;width:1px;height:20px;background:#f7f2fb"></div>
<div style="left:1073px;top:504px;width:1px;height:20px;background:#f7f2fb"></div>
<div style="left:1123px;top:504px;width:1px;height:20px;background:#f7f2fb"></div>
<div style="left:1203px;top:504px;width:1px;height:20px;background:#f7f2fb"></div>
<div style="left:1323px;top:504px;width:1px;height:20px;background:#f7f2fb"></div>
<div style="left:377px;top:514px;width:10px;height:1px;background:repeating-linear-gradient(90deg,#a0a0b0 0px,#a0a0b0 1px,transparent 1px,transparent 2px)"></div>
<svg style="left:387.5px;top:506px;" width="16" height="16" viewBox="0 0 16 16"><ellipse cx="7.5" cy="14.2" rx="6.2" ry="1.6" fill="#efc690"/><path d="M7.2 5 C7.8 8 7.6 11 6 14" stroke="#9a7c66" stroke-width="1.7" fill="none"/><path d="M1.5 7.5 C1.2 3.5 4 1.8 7.5 1.8 C11 1.8 13.8 3.5 13.5 7.5 C12.5 5.8 11.5 5.2 10.5 6.2 C9.8 4.8 8.5 4.4 7.5 5.2 C6.5 4.4 5.2 4.8 4.5 6.2 C3.5 5.2 2.5 5.8 1.5 7.5 Z" fill="#4ea58c"/></svg>
<span class="t" style="left:408.60px;top:508px;font-size:12px;line-height:12px;font-weight:400;color:#8c8c8c;transform:scaleX(0.9625);-webkit-text-stroke:0.15px currentColor;">Mi.</span>
<span class="t" style="left:494.30px;top:508px;font-size:12px;line-height:12px;font-weight:400;color:#8c8c8c;transform:scaleX(0.8891);-webkit-text-stroke:0.15px currentColor;">21.09.2022</span>
<span class="t" style="left:759.10px;top:508px;font-size:12px;line-height:12px;font-weight:400;color:#8c8c8c;transform:scaleX(0.8898);-webkit-text-stroke:0.15px currentColor;">8:00</span>
<span class="t" style="left:824.20px;top:508px;font-size:12px;line-height:12px;font-weight:400;color:#8c8c8c;transform:scaleX(0.8898);-webkit-text-stroke:0.15px currentColor;">8:00</span>
<span class="t" style="left:1019.00px;top:508px;font-size:12px;line-height:12px;font-weight:400;color:#8c8c8c;transform:scaleX(0.8898);-webkit-text-stroke:0.15px currentColor;">8:00</span>
<span class="t" style="left:1214.00px;top:508px;font-size:12px;line-height:12px;font-weight:400;color:#8c8c8c;transform:scaleX(0.9500);-webkit-text-stroke:0.15px currentColor;">Urlaub</span>
<div style="left:344px;top:524px;width:1062px;height:1px;background:#faf7fc"></div>
<div style="left:344px;top:525px;width:1062px;height:20px;background:#ece2f4"></div>
<div style="left:483px;top:525px;width:1px;height:20px;background:#f7f2fb"></div>
<div style="left:563px;top:525px;width:1px;height:20px;background:#f7f2fb"></div>
<div style="left:623px;top:525px;width:1px;height:20px;background:#f7f2fb"></div>
<div style="left:683px;top:525px;width:1px;height:20px;background:#f7f2fb"></div>
<div style="left:748px;top:525px;width:1px;height:20px;background:#f7f2fb"></div>
<div style="left:813px;top:525px;width:1px;height:20px;background:#f7f2fb"></div>
<div style="left:878px;top:525px;width:1px;height:20px;background:#f7f2fb"></div>
<div style="left:943px;top:525px;width:1px;height:20px;background:#f7f2fb"></div>
<div style="left:1008px;top:525px;width:1px;height:20px;background:#f7f2fb"></div>
<div style="left:1073px;top:525px;width:1px;height:20px;background:#f7f2fb"></div>
<div style="left:1123px;top:525px;width:1px;height:20px;background:#f7f2fb"></div>
<div style="left:1203px;top:525px;width:1px;height:20px;background:#f7f2fb"></div>
<div style="left:1323px;top:525px;width:1px;height:20px;background:#f7f2fb"></div>
<div style="left:377px;top:535px;width:10px;height:1px;background:repeating-linear-gradient(90deg,#a0a0b0 0px,#a0a0b0 1px,transparent 1px,transparent 2px)"></div>
<svg style="left:387.5px;top:527px;" width="16" height="16" viewBox="0 0 16 16"><ellipse cx="7.5" cy="14.2" rx="6.2" ry="1.6" fill="#efc690"/><path d="M7.2 5 C7.8 8 7.6 11 6 14" stroke="#9a7c66" stroke-width="1.7" fill="none"/><path d="M1.5 7.5 C1.2 3.5 4 1.8 7.5 1.8 C11 1.8 13.8 3.5 13.5 7.5 C12.5 5.8 11.5 5.2 10.5 6.2 C9.8 4.8 8.5 4.4 7.5 5.2 C6.5 4.4 5.2 4.8 4.5 6.2 C3.5 5.2 2.5 5.8 1.5 7.5 Z" fill="#4ea58c"/></svg>
<span class="t" style="left:408.60px;top:529px;font-size:12px;line-height:12px;font-weight:400;color:#8c8c8c;transform:scaleX(0.9204);-webkit-text-stroke:0.15px currentColor;">Do.</span>
<span class="t" style="left:494.30px;top:529px;font-size:12px;line-height:12px;font-weight:400;color:#8c8c8c;transform:scaleX(0.8891);-webkit-text-stroke:0.15px currentColor;">22.09.2022</span>
<span class="t" style="left:759.10px;top:529px;font-size:12px;line-height:12px;font-weight:400;color:#8c8c8c;transform:scaleX(0.8898);-webkit-text-stroke:0.15px currentColor;">8:00</span>
<span class="t" style="left:824.20px;top:529px;font-size:12px;line-height:12px;font-weight:400;color:#8c8c8c;transform:scaleX(0.8898);-webkit-text-stroke:0.15px currentColor;">8:00</span>
<span class="t" style="left:1019.00px;top:529px;font-size:12px;line-height:12px;font-weight:400;color:#8c8c8c;transform:scaleX(0.8898);-webkit-text-stroke:0.15px currentColor;">8:00</span>
<span class="t" style="left:1214.00px;top:529px;font-size:12px;line-height:12px;font-weight:400;color:#8c8c8c;transform:scaleX(0.9500);-webkit-text-stroke:0.15px currentColor;">Urlaub</span>
<div style="left:344px;top:545px;width:1062px;height:1px;background:#faf7fc"></div>
<div style="left:344px;top:546px;width:1062px;height:20px;background:#e6daf1"></div>
<div style="left:483px;top:546px;width:1px;height:20px;background:#f7f2fb"></div>
<div style="left:563px;top:546px;width:1px;height:20px;background:#f7f2fb"></div>
<div style="left:623px;top:546px;width:1px;height:20px;background:#f7f2fb"></div>
<div style="left:683px;top:546px;width:1px;height:20px;background:#f7f2fb"></div>
<div style="left:748px;top:546px;width:1px;height:20px;background:#f7f2fb"></div>
<div style="left:813px;top:546px;width:1px;height:20px;background:#f7f2fb"></div>
<div style="left:878px;top:546px;width:1px;height:20px;background:#f7f2fb"></div>
<div style="left:943px;top:546px;width:1px;height:20px;background:#f7f2fb"></div>
<div style="left:1008px;top:546px;width:1px;height:20px;background:#f7f2fb"></div>
<div style="left:1073px;top:546px;width:1px;height:20px;background:#f7f2fb"></div>
<div style="left:1123px;top:546px;width:1px;height:20px;background:#f7f2fb"></div>
<div style="left:1203px;top:546px;width:1px;height:20px;background:#f7f2fb"></div>
<div style="left:1323px;top:546px;width:1px;height:20px;background:#f7f2fb"></div>
<div style="left:377px;top:556px;width:10px;height:1px;background:repeating-linear-gradient(90deg,#a0a0b0 0px,#a0a0b0 1px,transparent 1px,transparent 2px)"></div>
<svg style="left:387.5px;top:548px;" width="16" height="16" viewBox="0 0 16 16"><ellipse cx="7.5" cy="14.2" rx="6.2" ry="1.6" fill="#efc690"/><path d="M7.2 5 C7.8 8 7.6 11 6 14" stroke="#9a7c66" stroke-width="1.7" fill="none"/><path d="M1.5 7.5 C1.2 3.5 4 1.8 7.5 1.8 C11 1.8 13.8 3.5 13.5 7.5 C12.5 5.8 11.5 5.2 10.5 6.2 C9.8 4.8 8.5 4.4 7.5 5.2 C6.5 4.4 5.2 4.8 4.5 6.2 C3.5 5.2 2.5 5.8 1.5 7.5 Z" fill="#4ea58c"/></svg>
<span class="t" style="left:408.60px;top:550px;font-size:12px;line-height:12px;font-weight:400;color:#8c8c8c;transform:scaleX(0.8500);-webkit-text-stroke:0.15px currentColor;">Fr.</span>
<span class="t" style="left:494.30px;top:550px;font-size:12px;line-height:12px;font-weight:400;color:#8c8c8c;transform:scaleX(0.8891);-webkit-text-stroke:0.15px currentColor;">23.09.2022</span>
<span class="t" style="left:759.10px;top:550px;font-size:12px;line-height:12px;font-weight:400;color:#8c8c8c;transform:scaleX(0.8898);-webkit-text-stroke:0.15px currentColor;">8:00</span>
<span class="t" style="left:824.20px;top:550px;font-size:12px;line-height:12px;font-weight:400;color:#8c8c8c;transform:scaleX(0.8898);-webkit-text-stroke:0.15px currentColor;">8:00</span>
<span class="t" style="left:1019.00px;top:550px;font-size:12px;line-height:12px;font-weight:400;color:#8c8c8c;transform:scaleX(0.8898);-webkit-text-stroke:0.15px currentColor;">8:00</span>
<span class="t" style="left:1214.00px;top:550px;font-size:12px;line-height:12px;font-weight:400;color:#8c8c8c;transform:scaleX(0.9500);-webkit-text-stroke:0.15px currentColor;">Urlaub</span>
<div style="left:344px;top:566px;width:1062px;height:1px;background:#faf7fc"></div>
<div style="left:344px;top:567px;width:1062px;height:20px;background:#ece2f4"></div>
<div style="left:483px;top:567px;width:1px;height:20px;background:#f7f2fb"></div>
<div style="left:563px;top:567px;width:1px;height:20px;background:#f7f2fb"></div>
<div style="left:623px;top:567px;width:1px;height:20px;background:#f7f2fb"></div>
<div style="left:683px;top:567px;width:1px;height:20px;background:#f7f2fb"></div>
<div style="left:748px;top:567px;width:1px;height:20px;background:#f7f2fb"></div>
<div style="left:813px;top:567px;width:1px;height:20px;background:#f7f2fb"></div>
<div style="left:878px;top:567px;width:1px;height:20px;background:#f7f2fb"></div>
<div style="left:943px;top:567px;width:1px;height:20px;background:#f7f2fb"></div>
<div style="left:1008px;top:567px;width:1px;height:20px;background:#f7f2fb"></div>
<div style="left:1073px;top:567px;width:1px;height:20px;background:#f7f2fb"></div>
<div style="left:1123px;top:567px;width:1px;height:20px;background:#f7f2fb"></div>
<div style="left:1203px;top:567px;width:1px;height:20px;background:#f7f2fb"></div>
<div style="left:1323px;top:567px;width:1px;height:20px;background:#f7f2fb"></div>
<div style="left:377px;top:577px;width:10px;height:1px;background:repeating-linear-gradient(90deg,#a0a0b0 0px,#a0a0b0 1px,transparent 1px,transparent 2px)"></div>
<svg style="left:387.5px;top:569px;" width="16" height="16" viewBox="0 0 16 16"><ellipse cx="7.5" cy="14.2" rx="6.2" ry="1.6" fill="#efc690"/><path d="M7.2 5 C7.8 8 7.6 11 6 14" stroke="#9a7c66" stroke-width="1.7" fill="none"/><path d="M1.5 7.5 C1.2 3.5 4 1.8 7.5 1.8 C11 1.8 13.8 3.5 13.5 7.5 C12.5 5.8 11.5 5.2 10.5 6.2 C9.8 4.8 8.5 4.4 7.5 5.2 C6.5 4.4 5.2 4.8 4.5 6.2 C3.5 5.2 2.5 5.8 1.5 7.5 Z" fill="#4ea58c"/></svg>
<span class="t" style="left:408.60px;top:571px;font-size:12px;line-height:12px;font-weight:400;color:#8c8c8c;transform:scaleX(0.9900);-webkit-text-stroke:0.15px currentColor;">Mo.</span>
<span class="t" style="left:494.30px;top:571px;font-size:12px;line-height:12px;font-weight:400;color:#8c8c8c;transform:scaleX(0.8891);-webkit-text-stroke:0.15px currentColor;">26.09.2022</span>
<span class="t" style="left:759.10px;top:571px;font-size:12px;line-height:12px;font-weight:400;color:#8c8c8c;transform:scaleX(0.8898);-webkit-text-stroke:0.15px currentColor;">8:00</span>
<span class="t" style="left:824.20px;top:571px;font-size:12px;line-height:12px;font-weight:400;color:#8c8c8c;transform:scaleX(0.8898);-webkit-text-stroke:0.15px currentColor;">8:00</span>
<span class="t" style="left:1019.00px;top:571px;font-size:12px;line-height:12px;font-weight:400;color:#8c8c8c;transform:scaleX(0.8898);-webkit-text-stroke:0.15px currentColor;">8:00</span>
<span class="t" style="left:1214.00px;top:571px;font-size:12px;line-height:12px;font-weight:400;color:#8c8c8c;transform:scaleX(0.9500);-webkit-text-stroke:0.15px currentColor;">Urlaub</span>
<div style="left:344px;top:587px;width:1062px;height:1px;background:#faf7fc"></div>
<div style="left:344px;top:588px;width:1062px;height:20px;background:#e6daf1"></div>
<div style="left:483px;top:588px;width:1px;height:20px;background:#f7f2fb"></div>
<div style="left:563px;top:588px;width:1px;height:20px;background:#f7f2fb"></div>
<div style="left:623px;top:588px;width:1px;height:20px;background:#f7f2fb"></div>
<div style="left:683px;top:588px;width:1px;height:20px;background:#f7f2fb"></div>
<div style="left:748px;top:588px;width:1px;height:20px;background:#f7f2fb"></div>
<div style="left:813px;top:588px;width:1px;height:20px;background:#f7f2fb"></div>
<div style="left:878px;top:588px;width:1px;height:20px;background:#f7f2fb"></div>
<div style="left:943px;top:588px;width:1px;height:20px;background:#f7f2fb"></div>
<div style="left:1008px;top:588px;width:1px;height:20px;background:#f7f2fb"></div>
<div style="left:1073px;top:588px;width:1px;height:20px;background:#f7f2fb"></div>
<div style="left:1123px;top:588px;width:1px;height:20px;background:#f7f2fb"></div>
<div style="left:1203px;top:588px;width:1px;height:20px;background:#f7f2fb"></div>
<div style="left:1323px;top:588px;width:1px;height:20px;background:#f7f2fb"></div>
<div style="left:377px;top:598px;width:10px;height:1px;background:repeating-linear-gradient(90deg,#a0a0b0 0px,#a0a0b0 1px,transparent 1px,transparent 2px)"></div>
<span class="t" style="left:408.60px;top:592px;font-size:12px;line-height:12px;font-weight:400;color:#8c8c8c;transform:scaleX(0.8647);-webkit-text-stroke:0.15px currentColor;">Di.</span>
<span class="t" style="left:430.30px;top:594px;font-size:10px;line-height:10px;font-weight:400;color:#8c8c8c;transform:scaleX(0.8793);-webkit-text-stroke:0.15px currentColor;">(N)</span>
<span class="t" style="left:494.30px;top:592px;font-size:12px;line-height:12px;font-weight:400;color:#8c8c8c;transform:scaleX(0.8891);-webkit-text-stroke:0.15px currentColor;">27.09.2022</span>
<span class="t" style="left:573.80px;top:592px;font-size:12px;line-height:12px;font-weight:400;color:#8c8c8c;transform:scaleX(0.9100);-webkit-text-stroke:0.15px currentColor;">08:45</span>
<span class="t" style="left:634.00px;top:592px;font-size:12px;line-height:12px;font-weight:400;color:#8c8c8c;transform:scaleX(0.9100);-webkit-text-stroke:0.15px currentColor;">17:15</span>
<span class="t" style="left:694.00px;top:592px;font-size:12px;line-height:12px;font-weight:400;color:#8c8c8c;transform:scaleX(0.8898);-webkit-text-stroke:0.15px currentColor;">0:30</span>
<span class="t" style="left:759.10px;top:592px;font-size:12px;line-height:12px;font-weight:400;color:#8c8c8c;transform:scaleX(0.8898);-webkit-text-stroke:0.15px currentColor;">8:00</span>
<span class="t" style="left:824.20px;top:592px;font-size:12px;line-height:12px;font-weight:400;color:#8c8c8c;transform:scaleX(0.8898);-webkit-text-stroke:0.15px currentColor;">8:00</span>
<div style="left:344px;top:608px;width:1062px;height:1px;background:#faf7fc"></div>
<div style="left:344px;top:609px;width:1062px;height:20px;background:#ece2f4"></div>
<div style="left:483px;top:609px;width:1px;height:20px;background:#f7f2fb"></div>
<div style="left:563px;top:609px;width:1px;height:20px;background:#f7f2fb"></div>
<div style="left:623px;top:609px;width:1px;height:20px;background:#f7f2fb"></div>
<div style="left:683px;top:609px;width:1px;height:20px;background:#f7f2fb"></div>
<div style="left:748px;top:609px;width:1px;height:20px;background:#f7f2fb"></div>
<div style="left:813px;top:609px;width:1px;height:20px;background:#f7f2fb"></div>
<div style="left:878px;top:609px;width:1px;height:20px;background:#f7f2fb"></div>
<div style="left:943px;top:609px;width:1px;height:20px;background:#f7f2fb"></div>
<div style="left:1008px;top:609px;width:1px;height:20px;background:#f7f2fb"></div>
<div style="left:1073px;top:609px;width:1px;height:20px;background:#f7f2fb"></div>
<div style="left:1123px;top:609px;width:1px;height:20px;background:#f7f2fb"></div>
<div style="left:1203px;top:609px;width:1px;height:20px;background:#f7f2fb"></div>
<div style="left:1323px;top:609px;width:1px;height:20px;background:#f7f2fb"></div>
<div style="left:377px;top:619px;width:10px;height:1px;background:repeating-linear-gradient(90deg,#a0a0b0 0px,#a0a0b0 1px,transparent 1px,transparent 2px)"></div>
<span class="t" style="left:408.60px;top:613px;font-size:12px;line-height:12px;font-weight:400;color:#8c8c8c;transform:scaleX(0.9625);-webkit-text-stroke:0.15px currentColor;">Mi.</span>
<span class="t" style="left:433.60px;top:615px;font-size:10px;line-height:10px;font-weight:400;color:#8c8c8c;transform:scaleX(0.8793);-webkit-text-stroke:0.15px currentColor;">(N)</span>
<span class="t" style="left:494.30px;top:613px;font-size:12px;line-height:12px;font-weight:400;color:#8c8c8c;transform:scaleX(0.8891);-webkit-text-stroke:0.15px currentColor;">28.09.2022</span>
<span class="t" style="left:573.80px;top:613px;font-size:12px;line-height:12px;font-weight:400;color:#8c8c8c;transform:scaleX(0.9100);-webkit-text-stroke:0.15px currentColor;">08:45</span>
<span class="t" style="left:634.00px;top:613px;font-size:12px;line-height:12px;font-weight:400;color:#8c8c8c;transform:scaleX(0.9100);-webkit-text-stroke:0.15px currentColor;">17:15</span>
<span class="t" style="left:694.00px;top:613px;font-size:12px;line-height:12px;font-weight:400;color:#8c8c8c;transform:scaleX(0.8898);-webkit-text-stroke:0.15px currentColor;">0:30</span>
<span class="t" style="left:759.10px;top:613px;font-size:12px;line-height:12px;font-weight:400;color:#8c8c8c;transform:scaleX(0.8898);-webkit-text-stroke:0.15px currentColor;">8:00</span>
<span class="t" style="left:824.20px;top:613px;font-size:12px;line-height:12px;font-weight:400;color:#8c8c8c;transform:scaleX(0.8898);-webkit-text-stroke:0.15px currentColor;">8:00</span>
<div style="left:344px;top:629px;width:1062px;height:1px;background:#faf7fc"></div>
<div style="left:344px;top:630px;width:1062px;height:20px;background:#e6daf1"></div>
<div style="left:483px;top:630px;width:1px;height:20px;background:#f7f2fb"></div>
<div style="left:563px;top:630px;width:1px;height:20px;background:#f7f2fb"></div>
<div style="left:623px;top:630px;width:1px;height:20px;background:#f7f2fb"></div>
<div style="left:683px;top:630px;width:1px;height:20px;background:#f7f2fb"></div>
<div style="left:748px;top:630px;width:1px;height:20px;background:#f7f2fb"></div>
<div style="left:813px;top:630px;width:1px;height:20px;background:#f7f2fb"></div>
<div style="left:878px;top:630px;width:1px;height:20px;background:#f7f2fb"></div>
<div style="left:943px;top:630px;width:1px;height:20px;background:#f7f2fb"></div>
<div style="left:1008px;top:630px;width:1px;height:20px;background:#f7f2fb"></div>
<div style="left:1073px;top:630px;width:1px;height:20px;background:#f7f2fb"></div>
<div style="left:1123px;top:630px;width:1px;height:20px;background:#f7f2fb"></div>
<div style="left:1203px;top:630px;width:1px;height:20px;background:#f7f2fb"></div>
<div style="left:1323px;top:630px;width:1px;height:20px;background:#f7f2fb"></div>
<div style="left:377px;top:640px;width:10px;height:1px;background:repeating-linear-gradient(90deg,#a0a0b0 0px,#a0a0b0 1px,transparent 1px,transparent 2px)"></div>
<span class="t" style="left:408.60px;top:634px;font-size:12px;line-height:12px;font-weight:400;color:#8c8c8c;transform:scaleX(0.9204);-webkit-text-stroke:0.15px currentColor;">Do.</span>
<span class="t" style="left:434.90px;top:636px;font-size:10px;line-height:10px;font-weight:400;color:#8c8c8c;transform:scaleX(0.8793);-webkit-text-stroke:0.15px currentColor;">(N)</span>
<span class="t" style="left:494.30px;top:634px;font-size:12px;line-height:12px;font-weight:400;color:#8c8c8c;transform:scaleX(0.8891);-webkit-text-stroke:0.15px currentColor;">29.09.2022</span>
<span class="t" style="left:573.80px;top:634px;font-size:12px;line-height:12px;font-weight:400;color:#8c8c8c;transform:scaleX(0.9100);-webkit-text-stroke:0.15px currentColor;">08:45</span>
<span class="t" style="left:634.00px;top:634px;font-size:12px;line-height:12px;font-weight:400;color:#8c8c8c;transform:scaleX(0.9100);-webkit-text-stroke:0.15px currentColor;">17:15</span>
<span class="t" style="left:694.00px;top:634px;font-size:12px;line-height:12px;font-weight:400;color:#8c8c8c;transform:scaleX(0.8898);-webkit-text-stroke:0.15px currentColor;">0:30</span>
<span class="t" style="left:759.10px;top:634px;font-size:12px;line-height:12px;font-weight:400;color:#8c8c8c;transform:scaleX(0.8898);-webkit-text-stroke:0.15px currentColor;">8:00</span>
<span class="t" style="left:824.20px;top:634px;font-size:12px;line-height:12px;font-weight:400;color:#8c8c8c;transform:scaleX(0.8898);-webkit-text-stroke:0.15px currentColor;">8:00</span>
<div style="left:344px;top:650px;width:1062px;height:1px;background:#faf7fc"></div>
<div style="left:344px;top:651px;width:1062px;height:20px;background:#ece2f4"></div>
<div style="left:483px;top:651px;width:1px;height:20px;background:#f7f2fb"></div>
<div style="left:563px;top:651px;width:1px;height:20px;background:#f7f2fb"></div>
<div style="left:623px;top:651px;width:1px;height:20px;background:#f7f2fb"></div>
<div style="left:683px;top:651px;width:1px;height:20px;background:#f7f2fb"></div>
<div style="left:748px;top:651px;width:1px;height:20px;background:#f7f2fb"></div>
<div style="left:813px;top:651px;width:1px;height:20px;background:#f7f2fb"></div>
<div style="left:878px;top:651px;width:1px;height:20px;background:#f7f2fb"></div>
<div style="left:943px;top:651px;width:1px;height:20px;background:#f7f2fb"></div>
<div style="left:1008px;top:651px;width:1px;height:20px;background:#f7f2fb"></div>
<div style="left:1073px;top:651px;width:1px;height:20px;background:#f7f2fb"></div>
<div style="left:1123px;top:651px;width:1px;height:20px;background:#f7f2fb"></div>
<div style="left:1203px;top:651px;width:1px;height:20px;background:#f7f2fb"></div>
<div style="left:1323px;top:651px;width:1px;height:20px;background:#f7f2fb"></div>
<div style="left:377px;top:661px;width:10px;height:1px;background:repeating-linear-gradient(90deg,#a0a0b0 0px,#a0a0b0 1px,transparent 1px,transparent 2px)"></div>
<span class="t" style="left:408.60px;top:655px;font-size:12px;line-height:12px;font-weight:400;color:#8c8c8c;transform:scaleX(0.8500);-webkit-text-stroke:0.15px currentColor;">Fr.</span>
<span class="t" style="left:429.70px;top:657px;font-size:10px;line-height:10px;font-weight:400;color:#8c8c8c;transform:scaleX(0.8793);-webkit-text-stroke:0.15px currentColor;">(N)</span>
<span class="t" style="left:494.30px;top:655px;font-size:12px;line-height:12px;font-weight:400;color:#8c8c8c;transform:scaleX(0.8891);-webkit-text-stroke:0.15px currentColor;">30.09.2022</span>
<span class="t" style="left:573.80px;top:655px;font-size:12px;line-height:12px;font-weight:400;color:#8c8c8c;transform:scaleX(0.9100);-webkit-text-stroke:0.15px currentColor;">08:45</span>
<span class="t" style="left:634.00px;top:655px;font-size:12px;line-height:12px;font-weight:400;color:#8c8c8c;transform:scaleX(0.9100);-webkit-text-stroke:0.15px currentColor;">17:15</span>
<span class="t" style="left:694.00px;top:655px;font-size:12px;line-height:12px;font-weight:400;color:#8c8c8c;transform:scaleX(0.8898);-webkit-text-stroke:0.15px currentColor;">0:30</span>
<span class="t" style="left:759.10px;top:655px;font-size:12px;line-height:12px;font-weight:400;color:#8c8c8c;transform:scaleX(0.8898);-webkit-text-stroke:0.15px currentColor;">8:00</span>
<span class="t" style="left:824.20px;top:655px;font-size:12px;line-height:12px;font-weight:400;color:#8c8c8c;transform:scaleX(0.8898);-webkit-text-stroke:0.15px currentColor;">8:00</span>
<div style="left:357px;top:247px;width:1px;height:435px;background:repeating-linear-gradient(180deg,#a0a0b0 0px,#a0a0b0 1px,transparent 1px,transparent 2px)"></div>
<div style="left:375px;top:252px;width:1px;height:410px;background:repeating-linear-gradient(180deg,#a0a0b0 0px,#a0a0b0 1px,transparent 1px,transparent 2px)"></div>
<div style="left:359px;top:681px;width:10px;height:1px;background:repeating-linear-gradient(90deg,#a0a0b0 0px,#a0a0b0 1px,transparent 1px,transparent 2px)"></div>
<div style="left:683px;top:671px;width:1px;height:21px;background:#f3f3f3"></div>
<div style="left:748px;top:671px;width:1px;height:21px;background:#f3f3f3"></div>
<div style="left:813px;top:671px;width:1px;height:21px;background:#f3f3f3"></div>
<div style="left:878px;top:671px;width:1px;height:21px;background:#f3f3f3"></div>
<div style="left:943px;top:671px;width:1px;height:21px;background:#f3f3f3"></div>
<div style="left:1008px;top:671px;width:1px;height:21px;background:#f3f3f3"></div>
<div style="left:1073px;top:671px;width:1px;height:21px;background:#f3f3f3"></div>
<div style="left:1123px;top:671px;width:1px;height:21px;background:#f3f3f3"></div>
<div style="left:1203px;top:671px;width:1px;height:21px;background:#f3f3f3"></div>
<div style="left:1323px;top:671px;width:1px;height:21px;background:#f3f3f3"></div>
<div style="left:344px;top:692px;width:1062px;height:1px;background:#f6f6f6"></div>
<span class="t" style="left:372.00px;top:676px;font-size:12px;line-height:12px;font-weight:700;color:#111;transform:scaleX(0.9688);-webkit-text-stroke:0.15px currentColor;">Gesamt:</span>
<span class="t" style="left:694.50px;top:676px;font-size:12px;line-height:12px;font-weight:700;color:#111;transform:scaleX(0.9500);-webkit-text-stroke:0.15px currentColor;">8:15</span>
<div style="left:694px;top:687px;width:23px;height:1px;background:#111"></div>
<span class="t" style="left:759.70px;top:676px;font-size:12px;line-height:12px;font-weight:700;color:#111;transform:scaleX(0.9819);-webkit-text-stroke:0.15px currentColor;">160:32</span>
<div style="left:760px;top:687px;width:37px;height:1px;background:#111"></div>
<span class="t" style="left:824.50px;top:676px;font-size:12px;line-height:12px;font-weight:700;color:#111;transform:scaleX(0.9819);-webkit-text-stroke:0.15px currentColor;">160:00</span>
<div style="left:824px;top:687px;width:37px;height:1px;background:#111"></div>
<span class="t" style="left:889.30px;top:676px;font-size:12px;line-height:12px;font-weight:700;color:#111;transform:scaleX(0.9903);-webkit-text-stroke:0.15px currentColor;">+0:32</span>
<div style="left:889px;top:687px;width:31px;height:1px;background:#111"></div>
<span class="t" style="left:1019.00px;top:676px;font-size:12px;line-height:12px;font-weight:700;color:#111;transform:scaleX(0.9841);-webkit-text-stroke:0.15px currentColor;">48:00</span>
<div style="left:1019px;top:687px;width:30px;height:1px;background:#111"></div>
<div style="left:954px;top:687px;width:3px;height:1px;background:#111"></div>
<div style="left:1084px;top:687px;width:3px;height:1px;background:#111"></div>
<div style="left:1134px;top:687px;width:3px;height:1px;background:#111"></div>
<svg style="left:0px;top:0px;pointer-events:none" width="1416" height="733" viewBox="0 0 1416 733"><path d="M805.86 23.26 L724.53 66.10 L727.47 71.90 L810.14 31.74 Z" fill="#ec0a0c"/><circle cx="808" cy="27.5" r="4.75" fill="#ec0a0c"/><circle cx="726" cy="69" r="3.25" fill="#ec0a0c"/><path d="M729.30 71.26 L745.77 45.06 L741.23 41.94 L722.70 66.74 Z" fill="#ec0a0c"/><circle cx="726" cy="69" r="4.0" fill="#ec0a0c"/><circle cx="743.5" cy="43.5" r="2.75" fill="#ec0a0c"/><path d="M725.87 73.00 L755.91 72.75 L756.09 67.25 L726.13 65.00 Z" fill="#ec0a0c"/><circle cx="726" cy="69" r="4.0" fill="#ec0a0c"/><circle cx="756" cy="70" r="2.75" fill="#ec0a0c"/><path d="M726 69 L734.8 56.2 L741.0 69.5 Z" fill="#ec0a0c" stroke="#ec0a0c" stroke-width="3" stroke-linejoin="round"/><path d="M790.02 70.68 L657.65 133.05 L660.35 138.95 L793.98 79.32 Z" fill="#ec0a0c"/><circle cx="792" cy="75" r="4.75" fill="#ec0a0c"/><circle cx="659" cy="136" r="3.25" fill="#ec0a0c"/><path d="M662.16 138.45 L680.17 113.19 L675.83 109.81 L655.84 133.55 Z" fill="#ec0a0c"/><circle cx="659" cy="136" r="4.0" fill="#ec0a0c"/><circle cx="678" cy="111.5" r="2.75" fill="#ec0a0c"/><path d="M658.73 139.99 L688.82 140.74 L689.18 135.26 L659.27 132.01 Z" fill="#ec0a0c"/><circle cx="659" cy="136" r="4.0" fill="#ec0a0c"/><circle cx="689" cy="138" r="2.75" fill="#ec0a0c"/><path d="M659 136 L668.5 123.8 L674.0 137.0 Z" fill="#ec0a0c" stroke="#ec0a0c" stroke-width="3" stroke-linejoin="round"/></svg>
</body></html>
